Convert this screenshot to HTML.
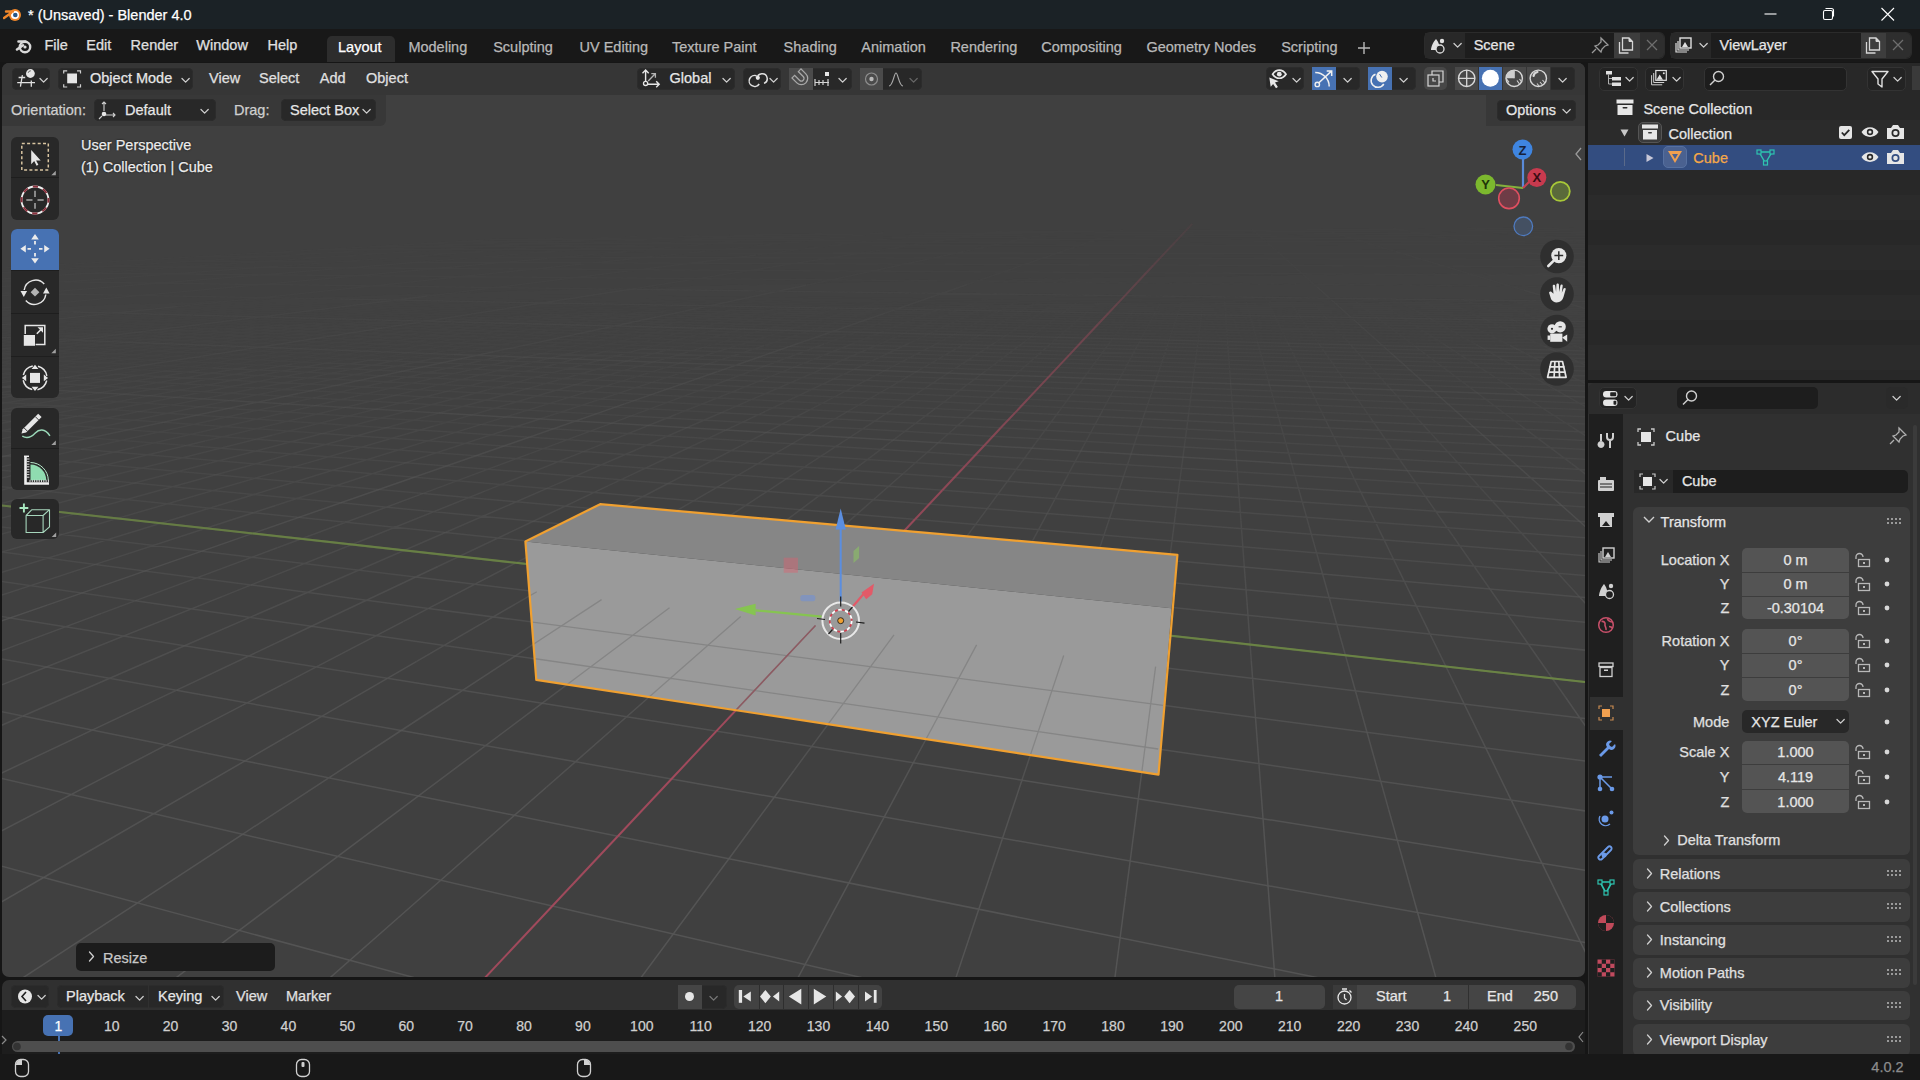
<!DOCTYPE html><html><head><meta charset="utf-8"><style>html,body{margin:0;padding:0}body{width:1920px;height:1080px;overflow:hidden;position:relative;background:#161616;font-family:"Liberation Sans",sans-serif}div{-webkit-text-stroke:0.25px currentColor}</style></head><body>
<div style="position:absolute;left:0px;top:0px;width:1920px;height:29px;background:#1b2226;border-radius:0px;"></div>
<svg style="position:absolute;left:3px;top:5px;" width="20" height="18" viewBox="0 0 20 18"><circle cx="12" cy="10" r="6" fill="#f0872a"/><circle cx="12" cy="10" r="4" fill="#fff"/><circle cx="12.3" cy="10" r="2.3" fill="#265787"/><path d="M1 13l7-5M3 6.5h7" stroke="#f0872a" stroke-width="2.4" stroke-linecap="round"/></svg>
<div style="position:absolute;left:28px;top:7.73px;font-size:14.5px;line-height:14.5px;color:#ffffff;white-space:pre;">* (Unsaved) - Blender 4.0</div>
<svg style="position:absolute;left:1760px;top:8px;" width="20" height="12" viewBox="0 0 20 12"><path d="M4.5 6h12" stroke="#fff" stroke-width="1.1"/></svg>
<svg style="position:absolute;left:1818px;top:6px;" width="22" height="16" viewBox="0 0 22 16"><rect x="5.5" y="4.5" width="9" height="9" rx="1.5" fill="none" stroke="#fff" stroke-width="1.1"/><path d="M7.5 2.5h6a2 2 0 0 1 2 2v6" fill="none" stroke="#fff" stroke-width="1.1"/></svg>
<svg style="position:absolute;left:1878px;top:6px;" width="20" height="16" viewBox="0 0 20 16"><path d="M3.5 2l12.5 12.5M16 2L3.5 14.5" stroke="#fff" stroke-width="1.1"/></svg>
<div style="position:absolute;left:0px;top:29px;width:1920px;height:33px;background:#181818;border-radius:0px;"></div>
<svg style="position:absolute;left:12px;top:36px;" width="22" height="20" viewBox="0 0 22 20"><path d="M5 13.5l6-4.2M6.5 5.5h7" stroke="#d9d9d9" stroke-width="2.6" stroke-linecap="round"/><circle cx="13" cy="11" r="5.2" fill="none" stroke="#d9d9d9" stroke-width="2.4"/><circle cx="13" cy="11" r="1.6" fill="#d9d9d9"/></svg>
<div style="position:absolute;left:44.4px;top:37.73px;font-size:14.5px;line-height:14.5px;color:#e0e0e0;white-space:pre;">File</div>
<div style="position:absolute;left:86.3px;top:37.73px;font-size:14.5px;line-height:14.5px;color:#e0e0e0;white-space:pre;">Edit</div>
<div style="position:absolute;left:130.6px;top:37.73px;font-size:14.5px;line-height:14.5px;color:#e0e0e0;white-space:pre;">Render</div>
<div style="position:absolute;left:196.3px;top:37.73px;font-size:14.5px;line-height:14.5px;color:#e0e0e0;white-space:pre;">Window</div>
<div style="position:absolute;left:267.5px;top:37.73px;font-size:14.5px;line-height:14.5px;color:#e0e0e0;white-space:pre;">Help</div>
<div style="position:absolute;left:327px;top:36px;width:68px;height:26px;background:#2d2d2d;border-radius:5px 5px 0 0px;"></div>
<div style="position:absolute;left:338px;top:40.13px;font-size:14.5px;line-height:14.5px;color:#ffffff;white-space:pre;">Layout</div>
<div style="position:absolute;left:408.4px;top:40.13px;font-size:14.5px;line-height:14.5px;color:#b8b8b8;white-space:pre;">Modeling</div>
<div style="position:absolute;left:493.2px;top:40.13px;font-size:14.5px;line-height:14.5px;color:#b8b8b8;white-space:pre;">Sculpting</div>
<div style="position:absolute;left:579.5px;top:40.13px;font-size:14.5px;line-height:14.5px;color:#b8b8b8;white-space:pre;">UV Editing</div>
<div style="position:absolute;left:672px;top:40.13px;font-size:14.5px;line-height:14.5px;color:#b8b8b8;white-space:pre;">Texture Paint</div>
<div style="position:absolute;left:783.6px;top:40.13px;font-size:14.5px;line-height:14.5px;color:#b8b8b8;white-space:pre;">Shading</div>
<div style="position:absolute;left:861.3px;top:40.13px;font-size:14.5px;line-height:14.5px;color:#b8b8b8;white-space:pre;">Animation</div>
<div style="position:absolute;left:950.4px;top:40.13px;font-size:14.5px;line-height:14.5px;color:#b8b8b8;white-space:pre;">Rendering</div>
<div style="position:absolute;left:1041.2px;top:40.13px;font-size:14.5px;line-height:14.5px;color:#b8b8b8;white-space:pre;">Compositing</div>
<div style="position:absolute;left:1146.4px;top:40.13px;font-size:14.5px;line-height:14.5px;color:#b8b8b8;white-space:pre;">Geometry Nodes</div>
<div style="position:absolute;left:1281.2px;top:40.13px;font-size:14.5px;line-height:14.5px;color:#b8b8b8;white-space:pre;">Scripting</div>
<svg style="position:absolute;left:1356px;top:40px;" width="16" height="16" viewBox="0 0 16 16"><path d="M8 2v12M2 8h12" stroke="#b8b8b8" stroke-width="1.4"/></svg>
<div style="position:absolute;left:1425.2px;top:33px;width:239.0px;height:24.5px;background:#1d1d1d;border-radius:5px;box-shadow:0 0 0 1px #2b2b2b"></div>
<div style="position:absolute;left:1425.2px;top:33px;width:39.5px;height:24.5px;background:#282828;border-radius:5px 0 0 5pxpx;"></div>
<svg style="position:absolute;left:1427.2px;top:35px;" width="36" height="20" viewBox="0 0 36 20"><path d="M4 15c0-4 3-9 5-11c2 2 4 7 4 11z" fill="#e0e0e0"/><circle cx="15" cy="6" r="2.2" fill="#e0e0e0"/><circle cx="13" cy="14" r="4" fill="#282828" stroke="#e0e0e0" stroke-width="1.3"/></svg>
<svg style="position:absolute;left:1453.2px;top:42px;" width="9" height="7" viewBox="0 0 9 7"><path d="M1 1.5l3.6 3.6l3.6-3.6" fill="none" stroke="#cfcfcf" stroke-width="1.25" stroke-linecap="round" stroke-linejoin="round"/></svg>
<div style="position:absolute;left:1473.7px;top:38.23px;font-size:14.5px;line-height:14.5px;color:#e6e6e6;white-space:pre;">Scene</div>
<div style="position:absolute;left:1614.2px;top:33px;width:25.5px;height:24.5px;background:#3d3d3d;border-radius:0px;"></div>
<svg style="position:absolute;left:1614.2px;top:33px;" width="25" height="24" viewBox="0 0 25 24"><path d="M5.5 9v11h9" fill="none" stroke="#d6d6d6" stroke-width="1.3"/><path d="M8.5 5h6.5l3.5 3.5v8.5h-10z" fill="none" stroke="#d6d6d6" stroke-width="1.3"/><path d="M15 5v3.5h3.5" fill="#d6d6d6" stroke="#d6d6d6" stroke-width="1"/></svg>
<div style="position:absolute;left:1639.7px;top:33px;width:24.5px;height:24.5px;background:#2e2e2e;border-radius:0 5px 5px 0px;"></div>
<svg style="position:absolute;left:1639.7px;top:33px;" width="25" height="24" viewBox="0 0 25 24"><path d="M7 7l10 10M17 7L7 17" stroke="#6e6e6e" stroke-width="1.3"/></svg>
<svg style="position:absolute;left:1589px;top:35px;" width="24" height="22" viewBox="0 0 24 22"><path d="M12 3l7 7l-3 1l-3 3l-1 3l-6-6l3-1l3-3z" fill="none" stroke="#9a9a9a" stroke-width="1.3"/><path d="M7 14l-4 4" stroke="#9a9a9a" stroke-width="1.3"/></svg>
<div style="position:absolute;left:1671px;top:33px;width:239.79999999999995px;height:24.5px;background:#1d1d1d;border-radius:5px;box-shadow:0 0 0 1px #2b2b2b"></div>
<div style="position:absolute;left:1671px;top:33px;width:39.5px;height:24.5px;background:#282828;border-radius:5px 0 0 5pxpx;"></div>
<svg style="position:absolute;left:1673px;top:35px;" width="36" height="20" viewBox="0 0 36 20"><rect x="7" y="3" width="11" height="10" fill="none" stroke="#e0e0e0" stroke-width="1.4"/><path d="M5 6v9h11M3 8v9h11" fill="none" stroke="#e0e0e0" stroke-width="1.2"/><path d="M9 12l3-5l3 5z" fill="#e0e0e0"/></svg>
<svg style="position:absolute;left:1699px;top:42px;" width="9" height="7" viewBox="0 0 9 7"><path d="M1 1.5l3.6 3.6l3.6-3.6" fill="none" stroke="#cfcfcf" stroke-width="1.25" stroke-linecap="round" stroke-linejoin="round"/></svg>
<div style="position:absolute;left:1719.5px;top:38.23px;font-size:14.5px;line-height:14.5px;color:#e6e6e6;white-space:pre;">ViewLayer</div>
<div style="position:absolute;left:1860.8px;top:33px;width:25.5px;height:24.5px;background:#3d3d3d;border-radius:0px;"></div>
<svg style="position:absolute;left:1860.8px;top:33px;" width="25" height="24" viewBox="0 0 25 24"><path d="M5.5 9v11h9" fill="none" stroke="#d6d6d6" stroke-width="1.3"/><path d="M8.5 5h6.5l3.5 3.5v8.5h-10z" fill="none" stroke="#d6d6d6" stroke-width="1.3"/><path d="M15 5v3.5h3.5" fill="#d6d6d6" stroke="#d6d6d6" stroke-width="1"/></svg>
<div style="position:absolute;left:1886.3px;top:33px;width:24.5px;height:24.5px;background:#2e2e2e;border-radius:0 5px 5px 0px;"></div>
<svg style="position:absolute;left:1886.3px;top:33px;" width="25" height="24" viewBox="0 0 25 24"><path d="M7 7l10 10M17 7L7 17" stroke="#6e6e6e" stroke-width="1.3"/></svg>
<div style="position:absolute;left:2px;top:63px;width:1583px;height:914px;background:#404040;border-radius:7px;overflow:hidden">
<svg style="position:absolute;left:-2px;top:-63px" width="1590" height="980" viewBox="0 0 1590 980"><path d="M45.2 335.6L-2.8 333.9M83.0 333.7L-11.5 330.4M120.0 331.7L-4.9 327.6M156.2 329.8L-13.0 324.4M191.6 328.0L-6.8 321.9M242.9 326.7L-0.8 319.4M276.8 324.9L-8.4 316.7M309.9 323.2L-2.7 314.5M359.4 321.9L-10.0 312.1M439.5 319.0L25.6 308.8M469.9 317.4L55.2 307.5M517.3 316.2L84.2 306.2M546.5 314.6L112.7 305.0M592.8 313.4L153.4 304.0M638.8 312.3L181.0 302.8M684.4 311.1L208.1 301.6M729.6 310.0L234.7 300.4M774.5 308.9L273.8 299.5M863.1 306.7L324.9 297.3M926.3 305.9L363.0 296.4M969.9 304.8L387.5 295.3M1033.2 304.0L424.9 294.4M1096.7 303.3L448.6 293.4M1181.7 302.8L485.4 292.5M1268.1 302.3L508.3 291.5M1378.7 302.1L544.5 290.7M1517.0 302.3L566.8 289.7M1603.5 300.0L637.8 288.0M1597.0 298.3L672.9 287.2M1590.8 296.7L693.7 286.3M1608.3 295.3L728.3 285.5M1602.1 293.8L762.7 284.7M1596.0 292.2L796.9 283.9M1590.1 290.8L830.9 283.1M1606.7 289.6L864.6 282.4M1600.8 288.2L898.2 281.6M88.5 273.2L-4.5 272.4M1610.9 285.7L979.7 280.2M1605.2 284.4L1012.7 279.4M1599.6 283.2L1060.9 278.8M1594.2 282.0L1093.7 278.1M1609.3 280.9L1141.9 277.4M1603.9 279.8L1190.4 276.8M1598.6 278.7L1239.0 276.2M1593.5 277.6L1287.7 275.5M1607.8 276.6L1336.6 274.9M253.8 267.3L37.8 266.0M1597.7 274.6L1469.8 273.8M1592.8 273.6L1537.7 273.3M417.7 262.2L123.6 261.0M600.3 257.5L197.7 256.7M833.0 253.2L262.4 253.0M1594.9 248.6L319.4 249.7M1599.7 244.3L370.0 246.7M1592.7 240.7L415.1 244.1M1597.0 237.5L455.7 241.7M1591.0 234.8L492.4 239.6M1594.9 232.3L600.2 237.3M1598.4 230.0L729.7 234.9M1584.9 228.1L911.4 232.3M1594.9 232.3L1552.2 228.3M1599.7 244.3L1467.4 228.2M1522.3 251.5L1393.0 228.6M1593.5 277.6L1574.2 273.5M1594.2 282.0L1555.9 273.4M1595.1 286.8L1537.7 273.3M1590.1 290.8L1519.7 273.2M1590.8 296.7L1501.9 273.1M1591.6 303.3L1484.2 273.0M1395.7 251.5L1321.5 229.1M1541.5 302.6L1449.3 272.8M1517.0 302.3L1432.2 272.7M1492.7 302.0L1415.1 272.6M1468.8 301.7L1398.3 272.5M1445.2 301.3L1389.9 276.2M1425.3 302.8L1372.5 276.1M1401.9 302.5L1355.2 276.0M1378.7 302.1L1338.1 275.9M1355.9 301.8L1321.1 275.8M1277.3 251.5L1252.0 228.9M1312.6 302.9L1287.7 275.5M1290.2 302.6L1271.2 275.4M1268.1 302.3L1254.9 275.3M1246.2 302.0L1238.7 275.2M1224.6 301.7L1222.7 275.1M1203.1 303.1L1206.8 275.0M1181.7 302.8L1191.0 274.9M1160.6 302.5L1173.3 278.7M1138.4 303.9L1157.1 278.6M1096.7 303.3L1125.1 278.3M1076.3 302.9L1109.3 278.2M1053.5 304.3L1093.7 278.1M1033.2 304.0L1078.2 277.9M1013.2 303.7L1062.8 277.8M989.7 305.1L1047.6 277.7M969.9 304.8L1032.5 277.6M945.9 306.2L1007.5 281.5M926.3 305.9L992.0 281.4M1062.0 251.5L1122.8 230.3M882.3 307.0L961.5 281.1M863.1 306.7L946.4 281.0M838.0 308.1L931.5 280.8M818.9 307.8L913.0 281.7M800.1 307.4L898.2 281.6M774.5 308.9L879.3 282.5M755.8 308.5L864.6 282.4M729.6 310.0L845.5 283.3M711.2 309.7L830.9 283.1M963.8 251.5L1061.3 230.7M666.2 310.8L796.9 283.9M638.8 312.3L777.1 284.8M610.8 313.8L762.7 284.7M592.8 313.4L742.6 285.6M564.2 315.0L728.3 285.5M546.5 314.6L707.9 286.4M517.3 316.2L693.7 286.3M487.5 317.8L672.9 287.2M469.9 317.4L658.9 287.1M860.5 253.2L1002.1 231.1M422.2 318.6L623.9 287.9M391.1 320.2L602.4 288.8M359.4 321.9L580.5 289.8M326.9 323.6L566.8 289.7M309.9 323.2L544.5 290.7M276.8 324.9L522.0 291.7M242.9 326.7L508.3 291.5M208.3 328.5L485.4 292.5M191.6 328.0L471.9 292.3M756.7 254.9L939.7 232.1M120.0 331.7L424.9 294.4M83.0 333.7L411.5 294.2M45.2 335.6L387.5 295.3M6.4 337.7L363.0 296.4M-9.8 337.0L338.1 297.5M-2.8 333.9L324.9 297.3M-18.4 333.3L299.6 298.4M-11.5 330.4L273.8 299.5M-4.9 327.6L247.7 300.7M652.5 256.7L883.6 232.5M-13.0 324.4L208.1 301.6M-6.8 321.9L181.0 302.8M-0.8 319.4L153.4 304.0M-14.4 319.0L140.7 303.7M-8.4 316.7L112.7 305.0M-2.7 314.5L84.2 306.2M-15.7 314.2L55.2 307.5M-10.0 312.1L25.6 308.8M547.9 258.4L822.1 233.5M417.7 262.2L760.5 234.4M278.1 266.2L698.8 235.4M88.5 273.2L636.9 236.4M-0.2 273.2L562.7 238.2M-20.4 269.4L499.3 239.2" stroke="#585858" stroke-opacity="0.031" stroke-width="1.5" fill="none"/><path d="M12.5 381.0L-9.4 379.7M64.8 377.5L-0.1 374.0M115.5 374.2L-11.7 367.7M164.7 371.0L-3.1 362.8M212.3 367.9L-13.7 357.3M281.5 365.9L-5.6 353.1M326.4 362.9L-15.5 348.3M370.0 360.0L-7.8 344.6M435.9 358.1L-0.5 341.0M541.0 353.5L45.2 335.6M604.1 351.7L83.0 333.7M642.0 349.1L120.0 331.7M703.4 347.4L156.2 329.8M789.5 346.5L191.6 328.0M849.9 344.7L242.9 326.7M936.2 343.8L276.8 324.9M1023.0 342.8L309.9 323.2M1139.0 342.6L359.4 321.9M73.0 312.1L-4.4 310.1M1614.5 348.1L439.5 319.0M1605.0 344.5L469.9 317.4M1595.9 341.0L517.3 316.2M1620.7 338.5L546.5 314.6M1611.6 335.3L592.8 313.4M1602.9 332.3L638.8 312.3M1594.6 329.4L684.4 311.1M1617.5 327.2L729.6 310.0M1609.1 324.5L774.5 308.9M339.5 299.1L-1.1 292.9M1593.4 319.4L863.1 306.7M1614.7 317.5L926.3 305.9M1607.0 315.2L969.9 304.8M1599.6 313.0L1033.2 304.0M1592.4 310.8L1096.7 303.3M1612.3 309.1L1181.7 302.8M1605.1 307.1L1268.1 302.3M1598.2 305.2L1378.7 302.1M1591.6 303.3L1517.0 302.3M630.3 289.2L-7.4 281.0M1595.1 286.8L88.5 273.2M1602.7 275.6L253.8 267.3M1591.6 266.7L417.7 262.2M1598.0 259.5L600.3 257.5M1603.4 253.6L833.0 253.2M1591.0 263.6L1522.3 251.5M1523.8 290.1L1395.7 251.5M1593.4 319.4L1541.5 302.6M1594.6 329.4L1517.0 302.3M1595.9 341.0L1492.7 302.0M1579.0 347.2L1468.8 301.7M1544.2 346.3L1445.2 301.3M1509.9 345.5L1425.3 302.8M1476.3 344.7L1401.9 302.5M1443.3 343.8L1378.7 302.1M1415.4 346.5L1355.9 301.8M1316.8 286.7L1277.3 251.5M1350.6 344.8L1312.6 302.9M1319.1 344.0L1290.2 302.6M1288.0 343.2L1268.1 302.3M1257.6 342.5L1246.2 302.0M1227.6 341.7L1224.6 301.7M1197.7 344.2L1203.1 303.1M1168.1 343.4L1181.7 302.8M1139.0 342.6L1160.6 302.5M1110.3 341.9L1138.4 303.9M1050.9 343.6L1096.7 303.3M1023.0 342.8L1076.3 302.9M995.7 342.1L1053.5 304.3M963.2 344.6L1033.2 304.0M936.2 343.8L1013.2 303.7M909.7 343.0L989.7 305.1M876.1 345.5L969.9 304.8M849.9 344.7L945.9 306.2M824.2 344.0L926.3 305.9M967.3 284.5L1062.0 251.5M764.1 345.7L882.3 307.0M728.4 348.2L863.1 306.7M703.4 347.4L838.0 308.1M666.6 350.0L818.9 307.8M642.0 349.1L800.1 307.4M604.1 351.7L774.5 308.9M579.9 350.9L755.8 308.5M541.0 353.5L729.6 310.0M500.9 356.3L711.2 309.7M806.2 285.2L963.8 251.5M435.9 358.1L666.2 310.8M403.0 359.1L638.8 312.3M370.0 360.0L610.8 313.8M326.4 362.9L592.8 313.4M292.6 363.9L564.2 315.0M247.0 366.9L546.5 314.6M200.0 370.0L517.3 316.2M164.7 371.0L487.5 317.8M115.5 374.2L469.9 317.4M630.3 289.2L860.5 253.2M12.5 381.0L422.2 318.6M-9.4 379.7L391.1 320.2M-0.1 374.0L359.4 321.9M-6.1 370.8L326.9 323.6M-11.7 367.7L309.9 323.2M-3.1 362.8L276.8 324.9M-8.5 360.0L242.9 326.7M-0.3 355.6L208.3 328.5M-5.6 353.1L191.6 328.0M427.9 296.0L756.7 254.9M-2.9 346.8L120.0 331.7M-7.8 344.6L83.0 333.7M-0.5 341.0L45.2 335.6M-5.2 339.0L6.4 337.7M177.7 306.4L652.5 256.7M-16.9 309.8L547.9 258.4M-14.8 297.1L417.7 262.2M-13.3 287.5L278.1 266.2M-0.0 279.1L88.5 273.2" stroke="#585858" stroke-opacity="0.094" stroke-width="1.5" fill="none"/><path d="M12.2 421.3L-15.1 419.2M77.1 416.2L-3.4 410.6M139.4 411.4L-17.4 401.0M199.5 406.7L-6.7 393.8M313.0 397.9L12.5 381.0M395.4 395.3L64.8 377.5M447.3 391.2L115.5 374.2M526.8 388.7L164.7 371.0M575.1 384.8L212.3 367.9M651.8 382.4L281.5 365.9M727.4 380.0L326.4 362.9M833.7 379.0L370.0 360.0M940.8 377.9L435.9 358.1M126.1 342.2L-9.8 337.0M1268.1 379.8L541.0 353.5M1590.1 386.0L604.1 351.7M1622.3 381.9L642.0 349.1M1610.5 376.5L703.4 347.4M1599.4 371.5L789.5 346.5M1629.1 367.9L849.9 344.7M1618.0 363.3L936.2 343.8M1607.5 359.0L1023.0 342.8M1597.5 354.9L1139.0 342.6M498.5 323.0L73.0 312.1M1601.1 321.9L339.5 299.1M1610.2 301.8L630.3 289.2M1592.4 310.8L1523.8 290.1M1597.5 354.9L1579.0 347.2M1599.4 371.5L1544.2 346.3M1590.1 386.0L1509.9 345.5M1556.7 390.3L1476.3 344.7M1512.6 388.7L1443.3 343.8M1469.5 387.1L1415.4 346.5M1353.7 319.7L1316.8 286.7M1386.2 384.1L1350.6 344.8M1346.0 382.6L1319.1 344.0M1306.6 381.2L1288.0 343.2M1268.1 379.8L1257.6 342.5M1230.3 378.5L1227.6 341.7M1193.4 377.1L1197.7 344.2M1157.3 375.8L1168.1 343.4M1119.2 379.5L1139.0 342.6M1083.5 378.2L1110.3 341.9M1011.7 378.1L1050.9 343.6M977.8 376.8L1023.0 342.8M940.8 377.9L995.7 342.1M907.9 376.7L963.2 344.6M870.9 377.8L936.2 343.8M833.7 379.0L909.7 343.0M796.3 380.2L876.1 345.5M764.8 378.9L849.9 344.7M727.4 380.0L824.2 344.0M885.4 313.0L967.3 284.5M651.8 382.4L764.1 345.7M613.6 383.6L728.4 348.2M575.1 384.8L703.4 347.4M526.8 388.7L666.6 350.0M487.2 390.0L642.0 349.1M447.3 391.2L604.1 351.7M395.4 395.3L579.9 350.9M354.4 396.6L541.0 353.5M299.6 400.9L500.9 356.3M656.7 317.1L806.2 285.2M199.5 406.7L435.9 358.1M139.4 411.4L403.0 359.1M94.7 412.8L370.0 360.0M31.2 417.7L326.4 362.9M-15.1 419.2L292.6 363.9M-3.4 410.6L247.0 366.9M-10.6 405.7L200.0 370.0M-17.4 401.0L164.7 371.0M-6.7 393.8L115.5 374.2M382.4 327.9L630.3 289.2M-3.2 383.3L12.5 381.0M-10.6 350.6L427.9 296.0M-19.6 327.1L177.7 306.4" stroke="#585858" stroke-opacity="0.156" stroke-width="1.5" fill="none"/><path d="M5.4 456.0L-26.3 453.1M81.2 449.3L-12.2 441.5M186.6 445.6L-27.8 428.7M256.0 439.3L12.2 421.3M322.4 433.4L77.1 416.2M386.0 427.7L139.4 411.4M481.4 424.4L199.5 406.7M631.2 415.9L313.0 397.9M721.1 412.8L395.4 395.3M847.4 411.7L447.3 391.2M974.7 410.6L526.8 388.7M1145.3 411.4L575.1 384.8M1619.0 425.6L651.8 382.4M1604.8 417.5L727.4 380.0M1591.5 410.0L833.7 379.0M1627.6 404.9L940.8 377.9M453.6 354.5L126.1 342.2M1601.8 391.9L1268.1 379.8M1624.5 351.9L498.5 323.0M1591.5 410.0L1556.7 390.3M1572.5 427.4L1512.6 388.7M1520.0 425.0L1469.5 387.1M1390.9 353.0L1353.7 319.7M1419.2 420.4L1386.2 384.1M1370.8 418.2L1346.0 382.6M1323.6 416.0L1306.6 381.2M1277.6 413.9L1268.1 379.8M1232.8 411.9L1230.3 378.5M1188.7 413.5L1193.4 377.1M1145.3 411.4L1157.3 375.8M1103.1 409.5L1119.2 379.5M1059.3 411.0L1083.5 378.2M974.7 410.6L1011.7 378.1M935.2 408.7L977.8 376.8M891.5 410.2L940.8 377.9M847.4 411.7L907.9 376.7M809.6 409.8L870.9 377.8M765.5 411.3L833.7 379.0M721.1 412.8L796.3 380.2M676.4 414.3L764.8 378.9M631.2 415.9L727.4 380.0M798.8 343.2L885.4 313.0M539.8 419.0L651.8 382.4M481.4 424.4L613.6 383.6M433.9 426.0L575.1 384.8M386.0 427.7L526.8 388.7M322.4 433.4L487.2 390.0M272.8 435.1L447.3 391.2M205.0 441.1L395.4 395.3M134.1 447.4L354.4 396.6M60.0 454.0L299.6 400.9M493.6 351.8L656.7 317.1M-3.7 448.5L199.5 406.7M-12.2 441.5L139.4 411.4M-20.2 434.9L94.7 412.8M-7.5 424.9L31.2 417.7M34.9 382.2L382.4 327.9" stroke="#585858" stroke-opacity="0.219" stroke-width="1.5" fill="none"/><path d="M48.6 491.5L-24.3 484.0M134.4 483.0L-8.7 469.2M215.8 474.8L5.4 456.0M293.1 467.1L81.2 449.3M405.9 462.8L186.6 445.6M476.1 455.7L256.0 439.3M583.4 451.6L322.4 433.4M688.6 447.7L386.0 427.7M791.9 443.8L481.4 424.4M229.4 400.6L-19.3 385.8M1184.3 447.1L631.2 415.9M1625.2 461.4L721.1 412.8M1608.6 450.7L847.4 411.7M1593.3 440.8L974.7 410.6M1634.3 434.3L1145.3 411.4M853.7 369.5L453.6 354.5M1593.3 440.8L1572.5 427.4M1571.6 463.7L1520.0 425.0M1427.4 385.6L1390.9 353.0M1452.5 457.1L1419.2 420.4M1395.7 454.0L1370.8 418.2M1340.7 450.9L1323.6 416.0M1287.2 448.0L1277.6 413.9M1235.7 450.0L1232.8 411.9M1184.3 447.1L1188.7 413.5M1134.3 444.3L1145.3 411.4M1083.3 446.3L1103.1 409.5M1035.3 443.5L1059.3 411.0M938.2 442.7L974.7 410.6M887.2 444.6L935.2 408.7M842.9 441.9L891.5 410.2M791.9 443.8L847.4 411.7M740.5 445.8L809.6 409.8M688.6 447.7L765.5 411.3M636.2 449.7L721.1 412.8M583.4 451.6L676.4 414.3M530.0 453.6L631.2 415.9M717.2 371.7L798.8 343.2M405.9 462.8L539.8 419.0M349.8 465.0L481.4 424.4M274.3 472.6L433.9 426.0M215.8 474.8L386.0 427.7M134.4 483.0L322.4 433.4M48.6 491.5L272.8 435.1M-14.6 494.0L205.0 441.1M-24.3 484.0L134.1 447.4M-8.7 469.2L60.0 454.0M298.2 393.5L493.6 351.8M-13.2 389.7L34.9 382.2" stroke="#585858" stroke-opacity="0.281" stroke-width="1.5" fill="none"/><path d="M62.6 534.4L-21.8 524.2M253.5 512.7L48.6 491.5M340.8 502.8L134.4 483.0M423.3 493.4L215.8 474.8M547.0 488.4L293.1 467.1M668.1 483.5L405.9 462.8M786.6 478.7L476.1 455.7M954.2 477.6L583.4 451.6M1633.6 510.2L1561.6 505.4M1238.2 484.1L688.6 447.7M1613.8 495.3L791.9 443.8M438.9 413.0L229.4 400.6M1643.2 473.1L1184.3 447.1M1614.3 398.2L853.7 369.5M1595.7 481.8L1571.6 463.7M1468.9 422.7L1427.4 385.6M1492.3 500.9L1452.5 457.1M1425.3 496.4L1395.7 454.0M1360.8 492.2L1340.7 450.9M1298.4 488.0L1287.2 448.0M1238.2 484.1L1235.7 450.0M1179.9 480.2L1184.3 447.1M1123.6 476.5L1134.3 444.3M1065.8 478.9L1083.3 446.3M1011.9 475.2L1035.3 443.5M902.7 474.0L938.2 442.7M845.0 476.3L887.2 444.6M786.6 478.7L842.9 441.9M727.7 481.1L791.9 443.8M668.1 483.5L740.5 445.8M607.9 485.9L688.6 447.7M547.0 488.4L636.2 449.7M485.5 490.9L583.4 451.6M423.3 493.4L530.0 453.6M624.6 403.9L717.2 371.7M275.6 505.5L405.9 462.8M185.9 515.5L349.8 465.0M90.7 526.2L274.3 472.6M-10.5 537.5L215.8 474.8M-21.8 524.2L134.4 483.0M-4.1 504.8L48.6 491.5M27.7 451.2L298.2 393.5" stroke="#585858" stroke-opacity="0.344" stroke-width="1.5" fill="none"/><path d="M95.4 564.4L-42.1 546.3M201.8 551.2L62.6 534.4M445.4 532.5L253.5 512.7M533.3 521.3L340.8 502.8M668.5 515.4L423.3 493.4M800.5 509.7L547.0 488.4M1047.3 513.4L668.1 483.5M1599.1 538.9L786.6 478.7M1655.5 526.6L954.2 477.6M1561.6 505.4L1238.2 484.1M725.8 430.1L438.9 413.0M1511.1 460.3L1468.9 422.7M1529.9 542.4L1492.3 500.9M1453.3 536.5L1425.3 496.4M1379.7 530.9L1360.8 492.2M1308.9 525.5L1298.4 488.0M1240.9 520.3L1238.2 484.1M1175.3 515.3L1179.9 480.2M1109.6 518.3L1123.6 476.5M1047.3 513.4L1065.8 478.9M987.3 508.6L1011.9 475.2M856.7 514.4L902.7 474.0M800.5 509.7L845.0 476.3M734.9 512.5L786.6 478.7M668.5 515.4L727.7 481.1M601.3 518.3L668.1 483.5M533.3 521.3L607.9 485.9M445.4 532.5L547.0 488.4M373.9 535.7L485.5 490.9M277.3 547.8L423.3 493.4M529.2 437.2L624.6 403.9M95.4 564.4L275.6 505.5M-18.4 578.5L185.9 515.5M-30.8 561.6L90.7 526.2M-17.8 460.9L27.7 451.2" stroke="#585858" stroke-opacity="0.406" stroke-width="1.5" fill="none"/><path d="M10.4 617.9L-42.3 609.5M135.3 600.8L-18.4 578.5M251.0 584.9L95.4 564.4M415.5 577.1L201.8 551.2M669.0 555.6L445.4 532.5M817.8 548.6L533.3 521.3M1097.7 553.9L668.5 515.4M1645.7 580.6L800.5 509.7M1621.1 558.5L1047.3 513.4M1595.7 481.8L725.8 430.1M1553.4 498.1L1511.1 460.3M1579.6 597.0L1529.9 542.4M1489.9 589.0L1453.3 536.5M1398.8 570.1L1379.7 530.9M1319.5 563.2L1308.9 525.5M1244.3 567.0L1240.9 520.3M1169.5 560.3L1175.3 515.3M1097.7 553.9L1109.6 518.3M1028.9 547.7L1047.3 513.4M955.8 551.2L987.3 508.6M817.8 548.6L856.7 514.4M743.9 552.1L800.5 509.7M669.0 555.6L734.9 512.5M593.0 559.2L668.5 515.4M516.0 562.8L601.3 518.3M437.9 566.5L533.3 521.3M333.8 581.0L445.4 532.5M222.0 596.6L373.9 535.7M101.5 613.4L277.3 547.8M414.1 477.3L529.2 437.2M-4.8 597.2L95.4 564.4" stroke="#585858" stroke-opacity="0.469" stroke-width="1.5" fill="none"/><path d="M46.4 667.0L-13.6 656.3M184.5 645.8L10.4 617.9M311.4 626.3L135.3 600.8M428.5 608.4L251.0 584.9M601.6 599.6L415.5 577.1M1082.8 598.3L669.0 555.6M1604.1 624.1L817.8 548.6M1673.6 605.4L1097.7 553.9M1599.1 538.9L1553.4 498.1M1591.4 610.1L1579.6 597.0M1517.9 629.1L1489.9 589.0M1423.0 619.6L1398.8 570.1M1332.9 610.7L1319.5 563.2M1247.0 602.1L1244.3 567.0M1163.4 606.6L1169.5 560.3M1082.8 598.3L1097.7 553.9M1005.9 590.4L1028.9 547.7M923.8 594.6L955.8 551.2M769.6 591.1L817.8 548.6M686.2 595.3L743.9 552.1M601.6 599.6L669.0 555.6M515.7 603.9L593.0 559.2M403.1 621.6L516.0 562.8M311.4 626.3L437.9 566.5M184.5 645.8L333.8 581.0M46.4 667.0L222.0 596.6M-13.6 656.3L101.5 613.4M252.8 533.4L414.1 477.3" stroke="#585858" stroke-opacity="0.531" stroke-width="1.5" fill="none"/><path d="M22.9 716.0L-42.6 702.7M176.4 690.3L46.4 667.0M387.4 678.3L184.5 645.8M515.4 655.9L311.4 626.3M708.0 645.2L428.5 608.4M976.6 644.9L601.6 599.6M1632.2 655.0L1082.8 598.3M1565.5 697.3L1517.9 629.1M1454.7 684.5L1423.0 619.6M1350.2 672.3L1332.9 610.7M1251.3 660.9L1247.0 602.1M1157.7 650.0L1163.4 606.6M1069.0 639.7L1082.8 598.3M976.6 644.9L1005.9 590.4M894.0 634.9L923.8 594.6M708.0 645.2L769.6 591.1M612.5 650.5L686.2 595.3M515.4 655.9L601.6 599.6M416.7 661.4L515.7 603.9M282.8 684.3L403.1 621.6M136.0 709.4L311.4 626.3M-25.7 737.1L184.5 645.8M-42.6 702.7L46.4 667.0M47.2 605.1L252.8 533.4" stroke="#585858" stroke-opacity="0.594" stroke-width="1.5" fill="none"/><path d="M71.1 794.6L-6.1 776.7M245.0 760.9L22.9 716.0M401.2 730.5L176.4 690.3M542.3 703.2L387.4 678.3M754.4 690.5L515.4 655.9M1612.4 764.6L708.0 645.2M1702.8 732.8L976.6 644.9M1595.4 740.3L1565.5 697.3M1485.7 747.9L1454.7 684.5M1367.0 732.2L1350.2 672.3M1255.5 717.5L1251.3 660.9M1150.7 703.7L1157.7 650.0M1045.4 710.3L1069.0 639.7M948.7 697.0L976.6 644.9M843.5 703.4L894.0 634.9M649.4 696.8L708.0 645.2M542.3 703.2L612.5 650.5M401.2 730.5L515.4 655.9M285.0 737.7L416.7 661.4M120.8 768.7L282.8 684.3M-6.1 776.7L136.0 709.4M-28.8 631.5L47.2 605.1" stroke="#585858" stroke-opacity="0.656" stroke-width="1.5" fill="none"/><path d="M43.6 877.5L-43.1 854.1M242.5 834.3L71.1 794.6M418.5 795.9L245.0 760.9M671.5 778.9L401.2 730.5M913.4 762.7L542.3 703.2M1651.4 820.5L754.4 690.5M1525.9 830.3L1485.7 747.9M1388.6 809.4L1367.0 732.2M1260.9 789.9L1255.5 717.5M1141.8 771.8L1150.7 703.7M1022.0 780.1L1045.4 710.3M913.4 762.7L948.7 697.0M793.8 770.7L843.5 703.4M546.4 787.3L649.4 696.8M418.5 795.9L542.3 703.2M242.5 834.3L401.2 730.5M43.6 877.5L285.0 737.7M-43.1 854.1L120.8 768.7" stroke="#585858" stroke-opacity="0.719" stroke-width="1.5" fill="none"/><path d="M7.1 988.1L-91.9 956.1M239.2 930.4L43.6 877.5M552.3 906.0L242.5 834.3M728.9 858.7L418.5 795.9M1758.1 973.5L671.5 778.9M1698.9 888.6L913.4 762.7M1580.3 941.6L1525.9 830.3M1417.6 912.5L1388.6 809.4M1268.0 885.7L1260.9 789.9M1125.4 897.3L1141.8 771.8M991.3 871.8L1022.0 780.1M848.9 882.9L913.4 762.7M728.9 858.7L793.8 770.7M397.9 918.0L546.4 787.3M239.2 930.4L418.5 795.9M7.1 988.1L242.5 834.3M-20.4 914.7L43.6 877.5" stroke="#585858" stroke-opacity="0.781" stroke-width="1.5" fill="none"/><path d="M470.8 992.9L239.2 930.4M949.2 997.9L552.3 906.0M1443.0 1003.0L728.9 858.7M1603.0 988.0L1580.3 941.6M1443.0 1003.0L1417.6 912.5M1277.9 1018.5L1268.0 885.7M1114.2 983.2L1125.4 897.3M949.2 997.9L991.3 871.8M779.0 1013.1L848.9 882.9M603.3 1028.7L728.9 858.7M295.9 1007.8L397.9 918.0M115.5 1023.1L239.2 930.4" stroke="#585858" stroke-opacity="0.844" stroke-width="1.5" fill="none"/><path d="M-1610.4 3211.4L-248.2 1759.3" stroke="#a04a5c" stroke-opacity="1.000" stroke-width="2"/><path d="M-248.2 1759.3L228.2 1251.5" stroke="#a04a5c" stroke-opacity="1.000" stroke-width="2"/><path d="M228.2 1251.5L470.8 992.9" stroke="#a04a5c" stroke-opacity="1.000" stroke-width="2"/><path d="M470.8 992.9L617.8 836.2" stroke="#a04a5c" stroke-opacity="1.000" stroke-width="2"/><path d="M617.8 836.2L716.4 731.1" stroke="#a04a5c" stroke-opacity="1.000" stroke-width="2"/><path d="M716.4 731.1L787.1 655.7" stroke="#a04a5c" stroke-opacity="1.000" stroke-width="2"/><path d="M787.1 655.7L840.3 599.0" stroke="#a04a5c" stroke-opacity="1.000" stroke-width="2"/><path d="M840.3 599.0L881.8 554.7" stroke="#a04a5c" stroke-opacity="0.945" stroke-width="2"/><path d="M881.8 554.7L915.1 519.3" stroke="#a04a5c" stroke-opacity="0.890" stroke-width="2"/><path d="M915.1 519.3L942.3 490.2" stroke="#a04a5c" stroke-opacity="0.839" stroke-width="2"/><path d="M942.3 490.2L965.1 466.0" stroke="#a04a5c" stroke-opacity="0.791" stroke-width="2"/><path d="M965.1 466.0L984.3 445.5" stroke="#a04a5c" stroke-opacity="0.748" stroke-width="2"/><path d="M984.3 445.5L1000.8 427.8" stroke="#a04a5c" stroke-opacity="0.708" stroke-width="2"/><path d="M1000.8 427.8L1015.2 412.6" stroke="#a04a5c" stroke-opacity="0.672" stroke-width="2"/><path d="M1015.2 412.6L1027.7 399.2" stroke="#a04a5c" stroke-opacity="0.639" stroke-width="2"/><path d="M1027.7 399.2L1038.8 387.4" stroke="#a04a5c" stroke-opacity="0.608" stroke-width="2"/><path d="M1038.8 387.4L1048.7 376.9" stroke="#a04a5c" stroke-opacity="0.581" stroke-width="2"/><path d="M1048.7 376.9L1069.1 355.1" stroke="#a04a5c" stroke-opacity="0.537" stroke-width="2"/><path d="M1069.1 355.1L1085.1 338.0" stroke="#a04a5c" stroke-opacity="0.485" stroke-width="2"/><path d="M1085.1 338.0L1098.0 324.3" stroke="#a04a5c" stroke-opacity="0.442" stroke-width="2"/><path d="M1098.0 324.3L1108.6 313.0" stroke="#a04a5c" stroke-opacity="0.405" stroke-width="2"/><path d="M1108.6 313.0L1117.4 303.6" stroke="#a04a5c" stroke-opacity="0.374" stroke-width="2"/><path d="M1117.4 303.6L1125.0 295.6" stroke="#a04a5c" stroke-opacity="0.348" stroke-width="2"/><path d="M1125.0 295.6L1131.4 288.7" stroke="#a04a5c" stroke-opacity="0.324" stroke-width="2"/><path d="M1131.4 288.7L1137.0 282.7" stroke="#a04a5c" stroke-opacity="0.304" stroke-width="2"/><path d="M1137.0 282.7L1146.3 272.8" stroke="#a04a5c" stroke-opacity="0.278" stroke-width="2"/><path d="M1146.3 272.8L1153.6 265.0" stroke="#a04a5c" stroke-opacity="0.249" stroke-width="2"/><path d="M1153.6 265.0L1159.6 258.6" stroke="#a04a5c" stroke-opacity="0.226" stroke-width="2"/><path d="M1159.6 258.6L1164.5 253.4" stroke="#a04a5c" stroke-opacity="0.207" stroke-width="2"/><path d="M1164.5 253.4L1168.7 248.9" stroke="#a04a5c" stroke-opacity="0.190" stroke-width="2"/><path d="M1168.7 248.9L1172.2 245.2" stroke="#a04a5c" stroke-opacity="0.176" stroke-width="2"/><path d="M1172.2 245.2L1175.3 241.9" stroke="#a04a5c" stroke-opacity="0.164" stroke-width="2"/><path d="M1175.3 241.9L1177.9 239.1" stroke="#a04a5c" stroke-opacity="0.154" stroke-width="2"/><path d="M1177.9 239.1L1180.3 236.6" stroke="#a04a5c" stroke-opacity="0.145" stroke-width="2"/><path d="M1180.3 236.6L1182.4 234.4" stroke="#a04a5c" stroke-opacity="0.136" stroke-width="2"/><path d="M1182.4 234.4L1184.2 232.4" stroke="#a04a5c" stroke-opacity="0.129" stroke-width="2"/><path d="M1184.2 232.4L1185.9 230.6" stroke="#a04a5c" stroke-opacity="0.122" stroke-width="2"/><path d="M1185.9 230.6L1187.4 229.0" stroke="#a04a5c" stroke-opacity="0.117" stroke-width="2"/><path d="M1187.4 229.0L1188.8 227.5" stroke="#a04a5c" stroke-opacity="0.111" stroke-width="2"/><path d="M1188.8 227.5L1190.0 226.2" stroke="#a04a5c" stroke-opacity="0.106" stroke-width="2"/><path d="M1190.0 226.2L1191.1 225.0" stroke="#a04a5c" stroke-opacity="0.102" stroke-width="2"/><path d="M1191.1 225.0L1192.2 223.9" stroke="#a04a5c" stroke-opacity="0.098" stroke-width="2"/><path d="M-10135.7 -624.8L-13407.3 -989.6" stroke="#6b8445" stroke-opacity="0.380" stroke-width="2"/><path d="M-13407.3 -989.6L-21341.5 -1874.2" stroke="#6b8445" stroke-opacity="0.411" stroke-width="2"/><path d="M-21341.5 -1874.2L-68613.5 -7144.8" stroke="#6b8445" stroke-opacity="0.447" stroke-width="2"/><path d="M-68613.5 -7144.8L42581.9 5253.0" stroke="#6b8445" stroke-opacity="0.489" stroke-width="2"/><path d="M42581.9 5253.0L14488.4 2120.7" stroke="#6b8445" stroke-opacity="0.539" stroke-width="2"/><path d="M14488.4 2120.7L8033.4 1401.0" stroke="#6b8445" stroke-opacity="0.598" stroke-width="2"/><path d="M8033.4 1401.0L5168.0 1081.5" stroke="#6b8445" stroke-opacity="0.668" stroke-width="2"/><path d="M5168.0 1081.5L3549.2 901.0" stroke="#6b8445" stroke-opacity="0.749" stroke-width="2"/><path d="M3549.2 901.0L2509.0 785.0" stroke="#6b8445" stroke-opacity="0.838" stroke-width="2"/><path d="M2509.0 785.0L1784.1 704.2" stroke="#6b8445" stroke-opacity="0.923" stroke-width="2"/><path d="M1784.1 704.2L1250.1 644.6" stroke="#6b8445" stroke-opacity="0.981" stroke-width="2"/><path d="M1250.1 644.6L840.3 599.0" stroke="#6b8445" stroke-opacity="0.990" stroke-width="2"/><path d="M840.3 599.0L516.0 562.8" stroke="#6b8445" stroke-opacity="0.944" stroke-width="2"/><path d="M516.0 562.8L252.8 533.4" stroke="#6b8445" stroke-opacity="0.865" stroke-width="2"/><path d="M252.8 533.4L35.0 509.2" stroke="#6b8445" stroke-opacity="0.775" stroke-width="2"/><path d="M35.0 509.2L-148.2 488.7" stroke="#6b8445" stroke-opacity="0.691" stroke-width="2"/><path d="M-148.2 488.7L-304.4 471.3" stroke="#6b8445" stroke-opacity="0.618" stroke-width="2"/><path d="M-304.4 471.3L-439.3 456.3" stroke="#6b8445" stroke-opacity="0.556" stroke-width="2"/><path d="M-439.3 456.3L-556.8 443.2" stroke="#6b8445" stroke-opacity="0.503" stroke-width="2"/><path d="M-556.8 443.2L-660.2 431.7" stroke="#6b8445" stroke-opacity="0.459" stroke-width="2"/><path d="M-660.2 431.7L-751.8 421.4" stroke="#6b8445" stroke-opacity="0.421" stroke-width="2"/><path d="M-751.8 421.4L-833.6 412.3" stroke="#6b8445" stroke-opacity="0.389" stroke-width="2"/><path d="M-833.6 412.3L-907.0 404.1" stroke="#6b8445" stroke-opacity="0.361" stroke-width="2"/><path d="M-907.0 404.1L-973.3 396.7" stroke="#6b8445" stroke-opacity="0.336" stroke-width="2"/>
<polygon points="525.4,541.4 1171.5,608.2 1158.5,774.6 536.3,679.8" fill="#9a9a9a"/>
<polygon points="525.4,541.4 600.1,504.2 1177.4,554.9 1171.5,608.2" fill="#868686"/>
<clipPath id="fc"><polygon points="525.4,541.4 1171.5,608.2 1158.5,774.6 536.3,679.8"/></clipPath>
<g clip-path="url(#fc)"><path d="M1155.6 666.6L1091.0 1160.5M1063.7 655.5L911.0 1111.8M976.6 644.9L749.4 1068.2M894.0 634.9L603.3 1028.7M815.5 625.4L470.8 992.9M740.7 616.4L349.9 960.3M669.5 607.8L239.2 930.4M601.6 599.6L137.5 902.9M536.8 591.7L43.6 877.5M1113.8 1166.6L33.0 874.7M1127.3 1039.2L143.6 811.4M1137.7 941.3L235.4 758.9M1146.0 863.9L312.7 714.7M1152.7 801.0L378.7 676.9M1158.2 749.0L435.7 644.3M1162.9 705.3L485.5 615.9" stroke="#858585" stroke-width="1.3" fill="none"/>
<path d="M815.5 625.4L470.8 992.9" stroke="#8e5a62" stroke-width="1.5"/></g>
<polygon points="525.4,541.4 600.1,504.2 1177.4,554.9 1158.5,774.6 536.3,679.8" fill="none" stroke="#f0a030" stroke-width="2.2" stroke-linejoin="round"/>
<path d="M840.7 601.7V527" stroke="#5b8ee0" stroke-width="2"/><path d="M835.6 529.6l5.1-21l5.1 21z" fill="#5b8ee0"/>
<path d="M821.7 616.7L755.5 610.3" stroke="#86c451" stroke-width="2.2"/><path d="M734.8 608.9l20.8-5.2v11.9z" fill="#86c451"/>
<path d="M852.6 606.7L864 593.5" stroke="#e25a68" stroke-width="2.2"/><path d="M861.5 592.6l12.5-8.9l-1.8 10.5l-6 5z" fill="#e25a68"/>
<rect x="784.2" y="558.2" width="13.2" height="14" fill="#e06070" opacity="0.42" stroke="#e06070" stroke-width="1"/><path d="M853.5 551l5.6-5v12l-5.6 5z" fill="#8cc860" opacity="0.55"/><rect x="800.3" y="595" width="15" height="6.3" rx="2.5" fill="#6f8fd8" opacity="0.55"/>
<circle cx="840.7" cy="620.7" r="18.3" fill="none" stroke="#e8e8e8" stroke-width="2"/>
<circle cx="840.7" cy="620.7" r="11" fill="none" stroke="#ffffff" stroke-width="1.7" stroke-dasharray="4 3"/><circle cx="840.7" cy="620.7" r="11" fill="none" stroke="#d04050" stroke-width="1.7" stroke-dasharray="3 4" stroke-dashoffset="3.5"/>
<path d="M840.7 596.5v10M840.7 633v10.5M817 618.5l8 1M856 622l8.5 1.2M832.5 629.5l-4 4.5M848.5 611.5l4-4.5" stroke="#1e1e1e" stroke-width="1.2"/>
<circle cx="840.7" cy="620.7" r="3" fill="#f0a030" stroke="#222" stroke-width="0.9"/>
</svg>
</div>
<div style="position:absolute;left:2px;top:63px;width:1583px;height:32px;background:#363636;border-radius:7px 7px 0 0px;"></div>
<div style="position:absolute;left:2px;top:95px;width:384.3px;height:30.6px;background:#383838;border-radius:0 0 6px 0px;"></div>
<div style="position:absolute;left:1486px;top:95px;width:99px;height:30.6px;background:#383838;border-radius:0 0 0 6pxpx;"></div>
<div style="position:absolute;left:12px;top:68px;width:38px;height:22px;background:#282828;border-radius:5px;box-shadow:inset 0 0 0 1px #2c2c2c"></div>
<svg style="position:absolute;left:0px;top:60px;" width="60" height="35" viewBox="0 0 60 35"><path d="M17.2 22.7h17.8M18.6 17.5h6.6M22.4 15.2l-2 11.5M31.3 20.4v6.3" stroke="#e0e0e0" stroke-width="1.3"/><circle cx="30.4" cy="13.5" r="4.4" fill="#e6e6e6"/><path d="M28.2 12.8a2.5 2.5 0 0 1 2.6-2" stroke="#555" stroke-width="0.9" fill="none"/></svg>
<svg style="position:absolute;left:38.5px;top:76.5px;" width="9" height="7" viewBox="0 0 9 7"><path d="M1 1.5l3.6 3.6l3.6-3.6" fill="none" stroke="#cfcfcf" stroke-width="1.25" stroke-linecap="round" stroke-linejoin="round"/></svg>
<div style="position:absolute;left:58px;top:68px;width:135px;height:22px;background:#282828;border-radius:5px;box-shadow:inset 0 0 0 1px #2c2c2c"></div>
<svg style="position:absolute;left:60px;top:68px;" width="26" height="22" viewBox="0 0 26 22"><rect x="7.2" y="5.5" width="9.8" height="9.8" fill="#e6e6e6"/><path d="M3.7 5.5V2.8h3.5M17 2.8h3.5v2.7M20.5 16.3V19h-3.5M7.2 19H3.7v-2.7" fill="none" stroke="#cfcfcf" stroke-width="1.2"/></svg>
<div style="position:absolute;left:90px;top:70.63px;font-size:14.5px;line-height:14.5px;color:#e6e6e6;white-space:pre;">Object Mode</div>
<svg style="position:absolute;left:181px;top:77px;" width="9" height="7" viewBox="0 0 9 7"><path d="M1 1.5l3.6 3.6l3.6-3.6" fill="none" stroke="#cfcfcf" stroke-width="1.25" stroke-linecap="round" stroke-linejoin="round"/></svg>
<div style="position:absolute;left:209px;top:70.63px;font-size:14.5px;line-height:14.5px;color:#e0e0e0;white-space:pre;">View</div>
<div style="position:absolute;left:259px;top:70.63px;font-size:14.5px;line-height:14.5px;color:#e0e0e0;white-space:pre;">Select</div>
<div style="position:absolute;left:319.8px;top:70.63px;font-size:14.5px;line-height:14.5px;color:#e0e0e0;white-space:pre;">Add</div>
<div style="position:absolute;left:366px;top:70.63px;font-size:14.5px;line-height:14.5px;color:#e0e0e0;white-space:pre;">Object</div>
<div style="position:absolute;left:637px;top:67.5px;width:98px;height:22.5px;background:#282828;border-radius:5px;box-shadow:inset 0 0 0 1px #2c2c2c"></div>
<svg style="position:absolute;left:636px;top:64px;" width="40" height="30" viewBox="0 0 40 30"><path d="M9.6 17.2V6.3M6.5 9.2l3.1-3.1l3.1 3.1M11.8 20.3h11.2M20.2 17.3l3 3l-3 3" fill="none" stroke="#e6e6e6" stroke-width="1.4"/><path d="M12.2 17l7-7.2M15.3 9.6h4.1v4.1" fill="none" stroke="#b4b4b4" stroke-width="1.3"/><circle cx="9.6" cy="19.4" r="2.1" fill="#282828" stroke="#e6e6e6" stroke-width="1.3"/></svg>
<div style="position:absolute;left:669.5px;top:70.63px;font-size:14.5px;line-height:14.5px;color:#e6e6e6;white-space:pre;">Global</div>
<svg style="position:absolute;left:722px;top:77px;" width="9" height="7" viewBox="0 0 9 7"><path d="M1 1.5l3.6 3.6l3.6-3.6" fill="none" stroke="#cfcfcf" stroke-width="1.25" stroke-linecap="round" stroke-linejoin="round"/></svg>
<div style="position:absolute;left:743px;top:67.5px;width:38px;height:22.5px;background:#282828;border-radius:5px;box-shadow:inset 0 0 0 1px #2c2c2c"></div>
<svg style="position:absolute;left:735px;top:62px;" width="40" height="32" viewBox="0 0 40 32"><path d="M22.2 16.5a5 5 0 1 1 6.8 4.9" fill="none" stroke="#e0e0e0" stroke-width="1.5"/><path d="M21.6 13.8a5.5 5.5 0 1 0 2.6 8.2" fill="none" stroke="#e0e0e0" stroke-width="1.5"/><circle cx="22.8" cy="15.8" r="2.1" fill="#e8e8e8"/></svg>
<svg style="position:absolute;left:769px;top:77px;" width="9" height="7" viewBox="0 0 9 7"><path d="M1 1.5l3.6 3.6l3.6-3.6" fill="none" stroke="#cfcfcf" stroke-width="1.25" stroke-linecap="round" stroke-linejoin="round"/></svg>
<div style="position:absolute;left:789px;top:67.5px;width:63px;height:22.5px;background:#282828;border-radius:5px;box-shadow:inset 0 0 0 1px #2c2c2c"></div>
<div style="position:absolute;left:789px;top:67.5px;width:23.5px;height:22.5px;background:#4b4b4b;border-radius:5px 0 0 5pxpx;"></div>
<svg style="position:absolute;left:785px;top:62px;" width="32" height="32" viewBox="0 0 32 32"><g transform="rotate(-45 16 16)"><path d="M11.5 9v7.5a4.5 4.5 0 0 0 9 0V9" fill="none" stroke="#a8a8a8" stroke-width="5"/><path d="M11.5 10.2v6.3a4.5 4.5 0 0 0 9 0v-6.3" fill="none" stroke="#4b4b4b" stroke-width="2.4"/></g></svg>
<svg style="position:absolute;left:813px;top:68px;" width="28" height="22" viewBox="0 0 28 22"><path d="M2 11v7M2 14.5h14M6 12v5M10 12v5M15 11v7" stroke="#d6d6d6" stroke-width="1.2"/><rect x="12" y="4" width="4" height="4" fill="#e6e6e6"/></svg>
<svg style="position:absolute;left:838px;top:77px;" width="9" height="7" viewBox="0 0 9 7"><path d="M1 1.5l3.6 3.6l3.6-3.6" fill="none" stroke="#cfcfcf" stroke-width="1.25" stroke-linecap="round" stroke-linejoin="round"/></svg>
<div style="position:absolute;left:860px;top:67.5px;width:62px;height:22.5px;background:#282828;border-radius:5px;box-shadow:inset 0 0 0 1px #2c2c2c"></div>
<div style="position:absolute;left:860px;top:67.5px;width:23.3px;height:22.5px;background:#4b4b4b;border-radius:5px 0 0 5pxpx;"></div>
<svg style="position:absolute;left:860px;top:68px;" width="24" height="22" viewBox="0 0 24 22"><circle cx="11.5" cy="11" r="6" fill="none" stroke="#8e8e8e" stroke-width="1.2"/><circle cx="11.5" cy="11" r="2.2" fill="#b8b8b8"/></svg>
<svg style="position:absolute;left:887px;top:68px;" width="24" height="22" viewBox="0 0 24 22"><path d="M2 18c4 0 5-13 7-13s3 13 7 13" fill="none" stroke="#a8a8a8" stroke-width="1.2"/></svg>
<svg style="position:absolute;left:909px;top:77px;" width="9" height="7" viewBox="0 0 9 7"><path d="M1 1.5l3.6 3.6l3.6-3.6" fill="none" stroke="#666" stroke-width="1.25" stroke-linecap="round" stroke-linejoin="round"/></svg>
<div style="position:absolute;left:1266px;top:67px;width:38px;height:23px;background:#282828;border-radius:5px;box-shadow:inset 0 0 0 1px #2c2c2c"></div>
<svg style="position:absolute;left:1260px;top:62px;" width="40" height="32" viewBox="0 0 40 32"><path d="M12.6 12.2c3.6-5.4 9.8-5.4 13.4 0c-3.6 5.4-9.8 5.4-13.4 0z" fill="none" stroke="#e6e6e6" stroke-width="1.7"/><circle cx="19.3" cy="12.2" r="2.4" fill="#e6e6e6"/><path d="M9.3 15.5l9.4 3.8l-3.7 1.3l2.9 4.3l-1.9 1.3l-2.9-4.3l-2.4 2.9z" fill="#e6e6e6"/></svg>
<svg style="position:absolute;left:1292px;top:77px;" width="9" height="7" viewBox="0 0 9 7"><path d="M1 1.5l3.6 3.6l3.6-3.6" fill="none" stroke="#cfcfcf" stroke-width="1.25" stroke-linecap="round" stroke-linejoin="round"/></svg>
<div style="position:absolute;left:1312px;top:67px;width:48px;height:23px;background:#282828;border-radius:5px;box-shadow:inset 0 0 0 1px #2c2c2c"></div>
<div style="position:absolute;left:1312px;top:67px;width:23.5px;height:23px;background:#4772b3;border-radius:5px 0 0 5pxpx;"></div>
<svg style="position:absolute;left:1312px;top:62px;" width="24" height="32" viewBox="0 0 24 32"><path d="M3.2 10.4a14 14 0 0 1 14 14" fill="none" stroke="#f0f0f0" stroke-width="1.5"/><circle cx="5.3" cy="22.4" r="2.2" fill="none" stroke="#f0f0f0" stroke-width="1.4"/><path d="M6.9 20.8l12.8-11.9M14.7 8.9h5v5" fill="none" stroke="#f0f0f0" stroke-width="1.5"/></svg>
<svg style="position:absolute;left:1343px;top:77px;" width="9" height="7" viewBox="0 0 9 7"><path d="M1 1.5l3.6 3.6l3.6-3.6" fill="none" stroke="#cfcfcf" stroke-width="1.25" stroke-linecap="round" stroke-linejoin="round"/></svg>
<div style="position:absolute;left:1368px;top:67px;width:48px;height:23px;background:#282828;border-radius:5px;box-shadow:inset 0 0 0 1px #2c2c2c"></div>
<div style="position:absolute;left:1368px;top:67px;width:23.5px;height:23px;background:#4772b3;border-radius:5px 0 0 5pxpx;"></div>
<svg style="position:absolute;left:1368px;top:62px;" width="24" height="32" viewBox="0 0 24 32"><circle cx="14" cy="14.6" r="5.8" fill="#f0f0f0"/><path d="M7.5 12.2a6.8 6.8 0 1 0 8.3 9.8" fill="none" stroke="#f0f0f0" stroke-width="1.5"/><path d="M11.5 12l2.3 3.5" stroke="#4772b3" stroke-width="1"/></svg>
<svg style="position:absolute;left:1399px;top:77px;" width="9" height="7" viewBox="0 0 9 7"><path d="M1 1.5l3.6 3.6l3.6-3.6" fill="none" stroke="#cfcfcf" stroke-width="1.25" stroke-linecap="round" stroke-linejoin="round"/></svg>
<div style="position:absolute;left:1424px;top:67px;width:23px;height:23px;background:#474747;border-radius:5px;"></div>
<svg style="position:absolute;left:1424px;top:67px;" width="23" height="23" viewBox="0 0 23 23"><rect x="4" y="8" width="11" height="11" fill="none" stroke="#d6d6d6" stroke-width="1.2"/><path d="M8 8V4h11v11h-4" fill="none" stroke="#d6d6d6" stroke-width="1.2"/><path d="M9 11v3h3" fill="none" stroke="#d6d6d6" stroke-width="1.2"/></svg>
<div style="position:absolute;left:1455px;top:67px;width:120px;height:23px;background:#282828;border-radius:5px;box-shadow:inset 0 0 0 1px #2c2c2c"></div>
<div style="position:absolute;left:1455px;top:67px;width:95px;height:23px;background:#484848;border-radius:5px 0 0 5pxpx;"></div>
<div style="position:absolute;left:1478.4px;top:67px;width:24px;height:23px;background:#4772b3;border-radius:0px;"></div>
<svg style="position:absolute;left:0px;top:0px;pointer-events:none" width="1590" height="100" viewBox="0 0 1590 100"><circle cx="1466.7" cy="78.3" r="8.2" fill="none" stroke="#d8d8d8" stroke-width="1.4"/><path d="M1466.7 70v16.6M1458.5 78.3h16.4" stroke="#d8d8d8" stroke-width="1.3"/><circle cx="1490.4" cy="78.3" r="8.5" fill="#ffffff"/><circle cx="1514.2" cy="78.3" r="8.2" fill="none" stroke="#d8d8d8" stroke-width="1.4"/><path d="M1514.2 70.1v8.2h-8.2a8.2 8.2 0 0 1 8.2-8.2z" fill="#cfcfcf"/><path d="M1514.2 70.1v8.2M1506 78.3l3 4M1517 80.5l2.5 3.5M1519.5 79l2.2 3" stroke="#cfcfcf" stroke-width="1.2"/><circle cx="1538.3" cy="78.3" r="8.2" fill="none" stroke="#d8d8d8" stroke-width="1.4"/><path d="M1533.5 76a5 5 0 0 1 4-4" stroke="#d8d8d8" stroke-width="2.2" stroke-linecap="round" fill="none"/><path d="M1540 82l2.5 3M1542.5 80l2.5 3M1537 83.5l2 2.5" stroke="#cfcfcf" stroke-width="1.1"/></svg>
<div style="position:absolute;left:1477.9px;top:67px;width:1px;height:23px;background:#353535;border-radius:0px;"></div>
<div style="position:absolute;left:1501.8px;top:67px;width:1px;height:23px;background:#353535;border-radius:0px;"></div>
<div style="position:absolute;left:1525.8px;top:67px;width:1px;height:23px;background:#353535;border-radius:0px;"></div>
<div style="position:absolute;left:1549.7px;top:67px;width:1px;height:23px;background:#353535;border-radius:0px;"></div>
<svg style="position:absolute;left:1558px;top:77px;" width="9" height="7" viewBox="0 0 9 7"><path d="M1 1.5l3.6 3.6l3.6-3.6" fill="none" stroke="#cfcfcf" stroke-width="1.25" stroke-linecap="round" stroke-linejoin="round"/></svg>
<div style="position:absolute;left:11px;top:103.23px;font-size:14.5px;line-height:14.5px;color:#cfcfcf;white-space:pre;">Orientation:</div>
<div style="position:absolute;left:93.6px;top:99.4px;width:122px;height:22px;background:#282828;border-radius:5px;box-shadow:inset 0 0 0 1px #2c2c2c"></div>
<svg style="position:absolute;left:96px;top:99px;" width="28" height="22" viewBox="0 0 28 22"><path d="M8 3v9M6 5l2-2l2 2M10 16h9M17 14l2 2l-2 2M6 17l-3 3" fill="none" stroke="#d0d0d0" stroke-width="1.1"/><circle cx="8" cy="15" r="2.3" fill="#e6e6e6"/></svg>
<div style="position:absolute;left:125px;top:103.23px;font-size:14.5px;line-height:14.5px;color:#e6e6e6;white-space:pre;">Default</div>
<svg style="position:absolute;left:200px;top:108px;" width="9" height="7" viewBox="0 0 9 7"><path d="M1 1.5l3.6 3.6l3.6-3.6" fill="none" stroke="#cfcfcf" stroke-width="1.25" stroke-linecap="round" stroke-linejoin="round"/></svg>
<div style="position:absolute;left:234px;top:103.23px;font-size:14.5px;line-height:14.5px;color:#cfcfcf;white-space:pre;">Drag:</div>
<div style="position:absolute;left:281px;top:99.4px;width:95px;height:22px;background:#282828;border-radius:5px;box-shadow:inset 0 0 0 1px #2c2c2c"></div>
<div style="position:absolute;left:290px;top:103.23px;font-size:14.5px;line-height:14.5px;color:#e6e6e6;white-space:pre;">Select Box</div>
<svg style="position:absolute;left:362px;top:108px;" width="9" height="7" viewBox="0 0 9 7"><path d="M1 1.5l3.6 3.6l3.6-3.6" fill="none" stroke="#cfcfcf" stroke-width="1.25" stroke-linecap="round" stroke-linejoin="round"/></svg>
<div style="position:absolute;left:1497px;top:99.8px;width:79px;height:21.3px;background:#282828;border-radius:5px;box-shadow:inset 0 0 0 1px #2c2c2c"></div>
<div style="position:absolute;left:1506px;top:103.23px;font-size:14.5px;line-height:14.5px;color:#e6e6e6;white-space:pre;">Options</div>
<svg style="position:absolute;left:1562px;top:108px;" width="9" height="7" viewBox="0 0 9 7"><path d="M1 1.5l3.6 3.6l3.6-3.6" fill="none" stroke="#cfcfcf" stroke-width="1.25" stroke-linecap="round" stroke-linejoin="round"/></svg>
<div style="position:absolute;left:11px;top:137px;width:48px;height:83px;background:#282828;border-radius:6px;"></div>
<div style="position:absolute;left:11px;top:229px;width:48px;height:169px;background:#282828;border-radius:6px;"></div>
<div style="position:absolute;left:11px;top:229.3px;width:48px;height:40.5px;background:#4772b3;border-radius:6px 6px 0 0px;"></div>
<div style="position:absolute;left:11px;top:407.6px;width:48px;height:82px;background:#282828;border-radius:6px;"></div>
<div style="position:absolute;left:11px;top:499.4px;width:48px;height:39.6px;background:#282828;border-radius:6px;"></div>
<div style="position:absolute;left:11px;top:177.4px;width:48px;height:1px;background:#1e1e1e;border-radius:0px;"></div>
<div style="position:absolute;left:11px;top:269.8px;width:48px;height:1px;background:#1e1e1e;border-radius:0px;"></div>
<div style="position:absolute;left:11px;top:313.3px;width:48px;height:1px;background:#1e1e1e;border-radius:0px;"></div>
<div style="position:absolute;left:11px;top:355.8px;width:48px;height:1px;background:#1e1e1e;border-radius:0px;"></div>
<div style="position:absolute;left:11px;top:448px;width:48px;height:1px;background:#1e1e1e;border-radius:0px;"></div>
<svg style="position:absolute;left:0px;top:0px;" width="70" height="560" viewBox="0 0 70 560"><rect x="21.8" y="143.4" width="26.5" height="26.5" fill="none" stroke="#d8c4a0" stroke-width="1.5" stroke-dasharray="3 2.3"/><path d="M31.2 150v14.3l3-3.2l2.4 4.6l1.8-0.9l-2.3-4.4h4.6z" fill="#e6e6e6"/><path d="M55.8 170.8v4.5h-4.5z" fill="#a0a0a0"/><circle cx="35" cy="200" r="13.5" fill="none" stroke="#f2f2f2" stroke-width="1.8"/><circle cx="35" cy="200" r="13.5" fill="none" stroke="#8a2f3c" stroke-width="1.9" stroke-dasharray="5.3 5.3" stroke-dashoffset="2.6"/><path d="M26.3 200h6.2M37.5 200h6.2M35 190.8v6.2M35 203v5.8" stroke="#a8a8a8" stroke-width="1.5"/><path d="M35 234l3.8 5.4h-7.6zM35 263.6l3.8-5.4h-7.6zM20.4 248.8l5.4-3.8v7.6zM49.6 248.8l-5.4-3.8v7.6z" fill="#ececec"/><path d="M35 241v3.5M35 253v3.5M27.5 248.8h3.5M39 248.8h3.5" stroke="#ececec" stroke-width="1.8"/><path d="M24.2 290a11.5 11.5 0 0 1 20-6M45.8 294.5a11.5 11.5 0 0 1-20 6" fill="none" stroke="#e6e6e6" stroke-width="1.5"/><path d="M35 287.8l4.4 4.4l-4.4 4.4l-4.4-4.4z" fill="#b4b4b4"/><path d="M20.5 291h6.6l-3.3 6zM43 293.5h6.6l-3.3-6z" fill="#e6e6e6"/><path d="M25.2 334v-8.4h19.6v19h-9.2" fill="none" stroke="#e6e6e6" stroke-width="1.5"/><rect x="23.8" y="335" width="11.2" height="10.8" fill="#e6e6e6"/><path d="M36.8 333.8l5-5" stroke="#e6e6e6" stroke-width="1.6"/><path d="M43 327.2v5.5l-5.5-5.5z" fill="#e6e6e6"/><path d="M55.8 348.8v4.5h-4.5z" fill="#a0a0a0"/><circle cx="35" cy="377.9" r="12" fill="none" stroke="#e6e6e6" stroke-width="1.5" stroke-dasharray="13.5 5.35" stroke-dashoffset="-2.7"/><rect x="30" y="372.9" width="10" height="10" fill="#e6e6e6"/><path d="M35 364.8l3.4 4.3h-6.8zM35 391l3.4-4.3h-6.8zM21.9 377.9l4.3-3.4v6.8zM48.1 377.9l-4.3-3.4v6.8z" fill="#e6e6e6"/><path d="M21.5 433.5l1.2-4.3l15.5-15.5l3.4 3.4l-15.5 15.5z" fill="#e6e6e6"/><path d="M35.3 416.6l3.4 3.4M24 427.8l3.4 3.4" stroke="#282828" stroke-width="0.9"/><path d="M22.3 436.2c5 3 10 0 13-3.2c3.5-3.8 9.5-5 14.6 2.8" fill="none" stroke="#9ad8b8" stroke-width="1.5"/><path d="M55.8 440.6v4.5h-4.5z" fill="#a0a0a0"/><path d="M30.5 464.5a16 16 0 0 1 15.8 15.8h-15.8z" fill="#8fdcb0"/><path d="M30.5 462.5a18 18 0 0 1 17.8 17.8" fill="none" stroke="#b8e8cc" stroke-width="1"/><path d="M25.5 456.3v27.2h23.5" fill="none" stroke="#f0f0f0" stroke-width="2.6"/><path d="M24 456.3h5" stroke="#f0f0f0" stroke-width="1.5"/><path d="M26.8 459.0h2.6" stroke="#f0f0f0" stroke-width="0.9"/><path d="M26.8 461.6h2.6" stroke="#f0f0f0" stroke-width="0.9"/><path d="M26.8 464.2h2.6" stroke="#f0f0f0" stroke-width="0.9"/><path d="M26.8 466.8h2.6" stroke="#f0f0f0" stroke-width="0.9"/><path d="M26.8 469.4h2.6" stroke="#f0f0f0" stroke-width="0.9"/><path d="M26.8 472.0h2.6" stroke="#f0f0f0" stroke-width="0.9"/><path d="M26.8 474.6h2.6" stroke="#f0f0f0" stroke-width="0.9"/><path d="M26.8 477.2h2.6" stroke="#f0f0f0" stroke-width="0.9"/><path d="M30.0 482.2v-2.4" stroke="#f0f0f0" stroke-width="0.9"/><path d="M32.3 482.2v-2.4" stroke="#f0f0f0" stroke-width="0.9"/><path d="M34.6 482.2v-2.4" stroke="#f0f0f0" stroke-width="0.9"/><path d="M36.9 482.2v-2.4" stroke="#f0f0f0" stroke-width="0.9"/><path d="M39.2 482.2v-2.4" stroke="#f0f0f0" stroke-width="0.9"/><path d="M41.5 482.2v-2.4" stroke="#f0f0f0" stroke-width="0.9"/><path d="M43.8 482.2v-2.4" stroke="#f0f0f0" stroke-width="0.9"/><path d="M46.1 482.2v-2.4" stroke="#f0f0f0" stroke-width="0.9"/><path d="M48.4 482.2v-2.4" stroke="#f0f0f0" stroke-width="0.9"/><path d="M23.9 503.6v8.8M19.5 508h8.8" stroke="#a8e8c0" stroke-width="1.9"/><path d="M26.1 515.5h17v17h-17zM26.1 515.5l5.8-5.8h17.6v17.2l-6.4 5.6M43.1 515.5l6.4-5.8" fill="none" stroke="#a6d6bc" stroke-width="1.1" stroke-linejoin="round"/><path d="M56.2 532.5v4.5h-4.5z" fill="#a0a0a0"/></svg>
<div style="position:absolute;left:81px;top:138.23px;font-size:14.5px;line-height:14.5px;color:#ececec;white-space:pre;text-shadow:0 0 2px #000">User Perspective</div>
<div style="position:absolute;left:81px;top:160.23px;font-size:14.5px;line-height:14.5px;color:#ececec;white-space:pre;text-shadow:0 0 2px #000">(1) Collection | Cube</div>
<svg style="position:absolute;left:0px;top:0px;pointer-events:none" width="1590" height="400" viewBox="0 0 1590 400"><path d="M1523 188V159" stroke="#5a8ad8" stroke-width="2.2"/><path d="M1523 188L1496 185" stroke="#84b03c" stroke-width="2.2"/><path d="M1523 188L1530 181" stroke="#c64050" stroke-width="2.2"/><circle cx="1523.3" cy="226.3" r="9.3" fill="#445062" stroke="#4f7bc0" stroke-width="1.3"/><circle cx="1509" cy="198.3" r="10.3" fill="#6e3c46" stroke="#e04f60" stroke-width="1.6"/><circle cx="1560.3" cy="191.3" r="9.5" fill="#5a6a3a" stroke="#a8c838" stroke-width="1.8"/><circle cx="1522.5" cy="149.5" r="10" fill="#3f85e0"/><text x="1522.5" y="154.5" font-size="13" font-weight="bold" text-anchor="middle" fill="#16213a" font-family="Liberation Sans">Z</text><circle cx="1536.8" cy="177.5" r="9.5" fill="#c83a4e"/><text x="1536.8" y="182" font-size="13" font-weight="bold" text-anchor="middle" fill="#3a0d14" font-family="Liberation Sans">X</text><circle cx="1485.5" cy="184.5" r="10" fill="#7cb82e"/><text x="1485.5" y="189.3" font-size="13" font-weight="bold" text-anchor="middle" fill="#1e3408" font-family="Liberation Sans">Y</text><circle cx="1557" cy="256.5" r="16.8" fill="#2e2e2e" opacity="0.92"/><circle cx="1557" cy="294" r="16.8" fill="#2e2e2e" opacity="0.92"/><circle cx="1557" cy="331.5" r="16.8" fill="#2e2e2e" opacity="0.92"/><circle cx="1557" cy="369" r="16.8" fill="#2e2e2e" opacity="0.92"/><circle cx="1558.8" cy="255.6" r="7.6" fill="#e6e6e6"/><path d="M1558.8 251.2v8.8M1554.4 255.6h8.8" stroke="#2e2e2e" stroke-width="1.5"/><path d="M1553.5 260.8l-5.2 5.2" stroke="#e6e6e6" stroke-width="2.6" stroke-linecap="round"/><path d="M1549.3 293.6c-0.8-1.3 0.6-2.8 2-1.8l2.2 1.9l-0.8-7.6c-0.1-1.5 2.3-1.7 2.5-0.2l0.9 6.2l0.3-7.5c0.1-1.6 2.4-1.6 2.5 0l0.3 7.5l1.2-6.6c0.3-1.5 2.5-1.2 2.3 0.3l-0.9 7l1.8-4.2c0.6-1.3 2.6-0.7 2.1 0.7l-2.2 7.8c-0.9 3.4-3.4 5.4-6.8 5.4c-2.6 0-4.3-1.3-5.6-3.2z" fill="#e6e6e6"/><circle cx="1552" cy="328.8" r="4.6" fill="#e6e6e6"/><circle cx="1560.2" cy="326.8" r="5.6" fill="#e6e6e6"/><circle cx="1552" cy="328.8" r="1.1" fill="#2e2e2e"/><path d="M1558.6 326.8h3.2" stroke="#2e2e2e" stroke-width="1.1"/><rect x="1550.2" y="333.6" width="12.2" height="8.2" fill="#e6e6e6"/><path d="M1547.6 335.5h2.6v4.4h-2.6z" fill="#e6e6e6"/><path d="M1562.2 337.6l5-3.2v7.4z" fill="#e6e6e6"/><path d="M1551.2 361.5h11.3l3.6 15.8h-18.5z" fill="none" stroke="#e6e6e6" stroke-width="1.7" stroke-linejoin="round"/><path d="M1549.3 366.8h15.1M1548.3 372.2h17.1M1554.9 361.5l-0.8 15.8M1558.8 361.5l0.8 15.8" stroke="#e6e6e6" stroke-width="1.7"/></svg>
<svg style="position:absolute;left:1574px;top:146px;" width="10" height="16" viewBox="0 0 10 16"><path d="M7 2l-5 6l5 6" fill="none" stroke="#9a9a9a" stroke-width="1.3"/></svg>
<div style="position:absolute;left:76px;top:942.5px;width:199px;height:28px;background:#1c1c1c;border-radius:5px;"></div>
<svg style="position:absolute;left:88px;top:951px;" width="7" height="11" viewBox="0 0 7 11"><path d="M1.5 1l4 4.5l-4 4.5" fill="none" stroke="#cfcfcf" stroke-width="1.3" stroke-linecap="round" stroke-linejoin="round"/></svg>
<div style="position:absolute;left:103px;top:950.73px;font-size:14.5px;line-height:14.5px;color:#c8c8c8;white-space:pre;">Resize</div>
<div style="position:absolute;left:2px;top:980px;width:1583px;height:74px;background:#303030;border-radius:7px;overflow:hidden">
</div>
<div style="position:absolute;left:2px;top:1010px;width:1583px;height:28px;background:#1d1d1d;border-radius:0px;"></div>
<div style="position:absolute;left:2px;top:1038px;width:1583px;height:16px;background:#1d1d1d;border-radius:0 0 7px 7pxpx;"></div>
<div style="position:absolute;left:11px;top:985px;width:38px;height:23px;background:#282828;border-radius:5px;box-shadow:inset 0 0 0 1px #2c2c2c"></div>
<svg style="position:absolute;left:14px;top:985px;" width="26" height="23" viewBox="0 0 26 23"><circle cx="11" cy="11.5" r="7" fill="#e6e6e6"/><path d="M12 7l-4 4.5l4 4.5" fill="none" stroke="#1f1f1f" stroke-width="1.6"/></svg>
<svg style="position:absolute;left:37px;top:994px;" width="9" height="7" viewBox="0 0 9 7"><path d="M1 1.5l3.6 3.6l3.6-3.6" fill="none" stroke="#cfcfcf" stroke-width="1.25" stroke-linecap="round" stroke-linejoin="round"/></svg>
<div style="position:absolute;left:57px;top:985px;width:167px;height:23px;background:#282828;border-radius:5px;box-shadow:inset 0 0 0 1px #2c2c2c"></div>
<div style="position:absolute;left:147.7px;top:985px;width:1px;height:23px;background:#303030;border-radius:0px;"></div>
<div style="position:absolute;left:66px;top:988.73px;font-size:14.5px;line-height:14.5px;color:#e6e6e6;white-space:pre;">Playback</div>
<svg style="position:absolute;left:135px;top:995px;" width="9" height="7" viewBox="0 0 9 7"><path d="M1 1.5l3.6 3.6l3.6-3.6" fill="none" stroke="#cfcfcf" stroke-width="1.25" stroke-linecap="round" stroke-linejoin="round"/></svg>
<div style="position:absolute;left:158px;top:988.73px;font-size:14.5px;line-height:14.5px;color:#e6e6e6;white-space:pre;">Keying</div>
<svg style="position:absolute;left:211px;top:995px;" width="9" height="7" viewBox="0 0 9 7"><path d="M1 1.5l3.6 3.6l3.6-3.6" fill="none" stroke="#cfcfcf" stroke-width="1.25" stroke-linecap="round" stroke-linejoin="round"/></svg>
<div style="position:absolute;left:236px;top:988.73px;font-size:14.5px;line-height:14.5px;color:#e0e0e0;white-space:pre;">View</div>
<div style="position:absolute;left:286px;top:988.73px;font-size:14.5px;line-height:14.5px;color:#e0e0e0;white-space:pre;">Marker</div>
<div style="position:absolute;left:677.5px;top:985px;width:49px;height:23.5px;background:#282828;border-radius:5px;box-shadow:inset 0 0 0 1px #2c2c2c"></div>
<div style="position:absolute;left:677.5px;top:985px;width:24px;height:23.5px;background:#454545;border-radius:5px 0 0 5pxpx;"></div>
<svg style="position:absolute;left:677px;top:985px;" width="25" height="23" viewBox="0 0 25 23"><circle cx="12.5" cy="11.5" r="4.5" fill="#e6e6e6"/></svg>
<svg style="position:absolute;left:709px;top:995px;" width="9" height="7" viewBox="0 0 9 7"><path d="M1 1.5l3.6 3.6l3.6-3.6" fill="none" stroke="#777" stroke-width="1.25" stroke-linecap="round" stroke-linejoin="round"/></svg>
<div style="position:absolute;left:733.7px;top:985px;width:148px;height:23.5px;background:#424242;border-radius:5px;"></div>
<div style="position:absolute;left:758.5px;top:985px;width:1px;height:23.5px;background:#2e2e2e;border-radius:0px;"></div>
<div style="position:absolute;left:783.3000000000001px;top:985px;width:1px;height:23.5px;background:#2e2e2e;border-radius:0px;"></div>
<div style="position:absolute;left:808.1px;top:985px;width:1px;height:23.5px;background:#2e2e2e;border-radius:0px;"></div>
<div style="position:absolute;left:832.9000000000001px;top:985px;width:1px;height:23.5px;background:#2e2e2e;border-radius:0px;"></div>
<div style="position:absolute;left:857.7px;top:985px;width:1px;height:23.5px;background:#2e2e2e;border-radius:0px;"></div>
<svg style="position:absolute;left:0px;top:0px;pointer-events:none" width="900" height="1080" viewBox="0 0 900 1080"><rect x="738.8" y="990" width="3.3" height="12.8" fill="#e6e6e6"/><path d="M743.3 996.6l7.5-5v10z" fill="#e6e6e6"/><path d="M765.4 989.9l5.4 6.7l-5.4 6.7l-5.4-6.7z" fill="#e6e6e6"/><path d="M772.9 996.6l6.3-5v10z" fill="#e6e6e6"/><path d="M788.8 996.6l12.5-7.9v15.8z" fill="#e6e6e6"/><path d="M826.3 996.6l-12.5-7.9v15.8z" fill="#e6e6e6"/><path d="M842.1 996.6l-6.3-5v10z" fill="#e6e6e6"/><path d="M849.6 989.9l5.4 6.7l-5.4 6.7l-5.4-6.7z" fill="#e6e6e6"/><path d="M872.1 996.6l-7.1-5v10z" fill="#e6e6e6"/><rect x="873.8" y="990" width="2.8" height="12.8" fill="#e6e6e6"/></svg>
<div style="position:absolute;left:1233.5px;top:985px;width:91.5px;height:23.5px;background:#454545;border-radius:5px;"></div>
<div style="position:absolute;left:1079px;width:400px;top:988.73px;font-size:14.5px;line-height:14.5px;color:#e6e6e6;white-space:pre;text-align:center;">1</div>
<div style="position:absolute;left:1332.5px;top:985px;width:243px;height:23.5px;background:#454545;border-radius:5px;"></div>
<div style="position:absolute;left:1332.5px;top:985px;width:24px;height:23.5px;background:#3a3a3a;border-radius:5px 0 0 5pxpx;"></div>
<div style="position:absolute;left:1467.5px;top:985px;width:1.5px;height:23.5px;background:#303030;border-radius:0px;"></div>
<svg style="position:absolute;left:1332px;top:985px;" width="25" height="23" viewBox="0 0 25 23"><circle cx="12.5" cy="12.5" r="6.5" fill="none" stroke="#e6e6e6" stroke-width="1.3"/><path d="M12.5 9v4l2 2M10 4h5M17.5 5.5l2 2" fill="none" stroke="#e6e6e6" stroke-width="1.3"/></svg>
<div style="position:absolute;left:1376px;top:988.73px;font-size:14.5px;line-height:14.5px;color:#e6e6e6;white-space:pre;">Start</div>
<div style="position:absolute;right:469px;top:988.73px;font-size:14.5px;line-height:14.5px;color:#e6e6e6;white-space:pre;text-align:right;">1</div>
<div style="position:absolute;left:1487px;top:988.73px;font-size:14.5px;line-height:14.5px;color:#e6e6e6;white-space:pre;">End</div>
<div style="position:absolute;right:362px;top:988.73px;font-size:14.5px;line-height:14.5px;color:#e6e6e6;white-space:pre;text-align:right;">250</div>
<div style="position:absolute;left:-88.28999999999999px;width:400px;top:1019.15px;font-size:14px;line-height:14px;color:#cfcfcf;white-space:pre;text-align:center;">10</div>
<div style="position:absolute;left:-29.389999999999986px;width:400px;top:1019.15px;font-size:14px;line-height:14px;color:#cfcfcf;white-space:pre;text-align:center;">20</div>
<div style="position:absolute;left:29.50999999999999px;width:400px;top:1019.15px;font-size:14px;line-height:14px;color:#cfcfcf;white-space:pre;text-align:center;">30</div>
<div style="position:absolute;left:88.40999999999997px;width:400px;top:1019.15px;font-size:14px;line-height:14px;color:#cfcfcf;white-space:pre;text-align:center;">40</div>
<div style="position:absolute;left:147.30999999999995px;width:400px;top:1019.15px;font-size:14px;line-height:14px;color:#cfcfcf;white-space:pre;text-align:center;">50</div>
<div style="position:absolute;left:206.20999999999998px;width:400px;top:1019.15px;font-size:14px;line-height:14px;color:#cfcfcf;white-space:pre;text-align:center;">60</div>
<div style="position:absolute;left:265.10999999999996px;width:400px;top:1019.15px;font-size:14px;line-height:14px;color:#cfcfcf;white-space:pre;text-align:center;">70</div>
<div style="position:absolute;left:324.01px;width:400px;top:1019.15px;font-size:14px;line-height:14px;color:#cfcfcf;white-space:pre;text-align:center;">80</div>
<div style="position:absolute;left:382.90999999999997px;width:400px;top:1019.15px;font-size:14px;line-height:14px;color:#cfcfcf;white-space:pre;text-align:center;">90</div>
<div style="position:absolute;left:441.81000000000006px;width:400px;top:1019.15px;font-size:14px;line-height:14px;color:#cfcfcf;white-space:pre;text-align:center;">100</div>
<div style="position:absolute;left:500.71000000000004px;width:400px;top:1019.15px;font-size:14px;line-height:14px;color:#cfcfcf;white-space:pre;text-align:center;">110</div>
<div style="position:absolute;left:559.61px;width:400px;top:1019.15px;font-size:14px;line-height:14px;color:#cfcfcf;white-space:pre;text-align:center;">120</div>
<div style="position:absolute;left:618.51px;width:400px;top:1019.15px;font-size:14px;line-height:14px;color:#cfcfcf;white-space:pre;text-align:center;">130</div>
<div style="position:absolute;left:677.41px;width:400px;top:1019.15px;font-size:14px;line-height:14px;color:#cfcfcf;white-space:pre;text-align:center;">140</div>
<div style="position:absolute;left:736.31px;width:400px;top:1019.15px;font-size:14px;line-height:14px;color:#cfcfcf;white-space:pre;text-align:center;">150</div>
<div style="position:absolute;left:795.21px;width:400px;top:1019.15px;font-size:14px;line-height:14px;color:#cfcfcf;white-space:pre;text-align:center;">160</div>
<div style="position:absolute;left:854.1099999999999px;width:400px;top:1019.15px;font-size:14px;line-height:14px;color:#cfcfcf;white-space:pre;text-align:center;">170</div>
<div style="position:absolute;left:913.01px;width:400px;top:1019.15px;font-size:14px;line-height:14px;color:#cfcfcf;white-space:pre;text-align:center;">180</div>
<div style="position:absolute;left:971.9100000000001px;width:400px;top:1019.15px;font-size:14px;line-height:14px;color:#cfcfcf;white-space:pre;text-align:center;">190</div>
<div style="position:absolute;left:1030.81px;width:400px;top:1019.15px;font-size:14px;line-height:14px;color:#cfcfcf;white-space:pre;text-align:center;">200</div>
<div style="position:absolute;left:1089.71px;width:400px;top:1019.15px;font-size:14px;line-height:14px;color:#cfcfcf;white-space:pre;text-align:center;">210</div>
<div style="position:absolute;left:1148.61px;width:400px;top:1019.15px;font-size:14px;line-height:14px;color:#cfcfcf;white-space:pre;text-align:center;">220</div>
<div style="position:absolute;left:1207.51px;width:400px;top:1019.15px;font-size:14px;line-height:14px;color:#cfcfcf;white-space:pre;text-align:center;">230</div>
<div style="position:absolute;left:1266.41px;width:400px;top:1019.15px;font-size:14px;line-height:14px;color:#cfcfcf;white-space:pre;text-align:center;">240</div>
<div style="position:absolute;left:1325.31px;width:400px;top:1019.15px;font-size:14px;line-height:14px;color:#cfcfcf;white-space:pre;text-align:center;">250</div>
<div style="position:absolute;left:43.3px;top:1015px;width:30px;height:21px;background:#4772b3;border-radius:5px;"></div>
<div style="position:absolute;left:-141.5px;width:400px;top:1019.15px;font-size:14px;line-height:14px;color:#ffffff;white-space:pre;text-align:center;">1</div>
<div style="position:absolute;left:58px;top:1036px;width:1.5px;height:18px;background:#4772b3;border-radius:0px;"></div>
<div style="position:absolute;left:12px;top:1040.8px;width:1563px;height:11.2px;background:#4e4e4e;border-radius:6px;"></div>
<svg style="position:absolute;left:12px;top:1041px;" width="12" height="11" viewBox="0 0 12 11"><circle cx="5" cy="5.5" r="3.8" fill="#333"/></svg>
<svg style="position:absolute;left:1563px;top:1041px;" width="12" height="11" viewBox="0 0 12 11"><circle cx="6" cy="5.5" r="3.8" fill="#333"/></svg>
<svg style="position:absolute;left:0px;top:1034px;" width="8" height="12" viewBox="0 0 8 12"><path d="M2 2l4 4l-4 4" fill="none" stroke="#8a8a8a" stroke-width="1.2"/></svg>
<svg style="position:absolute;left:1577px;top:1030px;" width="8" height="14" viewBox="0 0 8 14"><path d="M6 2l-4 5l4 5" fill="none" stroke="#8a8a8a" stroke-width="1.2"/></svg>
<div style="position:absolute;left:0px;top:1054px;width:1920px;height:26px;background:#181818;border-radius:0px;"></div>
<svg style="position:absolute;left:14px;top:1058px;" width="16" height="20" viewBox="0 0 16 20"><rect x="1.5" y="1.5" width="13" height="17" rx="5" fill="none" stroke="#d0d0d0" stroke-width="1.3"/><path d="M2 7V6a5 5 0 0 1 6-4.5V7z" fill="#d0d0d0"/></svg>
<svg style="position:absolute;left:295px;top:1058px;" width="16" height="20" viewBox="0 0 16 20"><rect x="1.5" y="1.5" width="13" height="17" rx="5" fill="none" stroke="#d0d0d0" stroke-width="1.3"/><rect x="6.5" y="4" width="3" height="5" rx="1" fill="#d0d0d0"/></svg>
<svg style="position:absolute;left:576px;top:1058px;" width="16" height="20" viewBox="0 0 16 20"><rect x="1.5" y="1.5" width="13" height="17" rx="5" fill="none" stroke="#d0d0d0" stroke-width="1.3"/><path d="M14 7V6a5 5 0 0 0-6-4.5V7z" fill="#d0d0d0"/></svg>
<div style="position:absolute;right:16.40000000000009px;top:1060.23px;font-size:14.5px;line-height:14.5px;color:#8c8c8c;white-space:pre;text-align:right;">4.0.2</div>
<div style="position:absolute;left:1588px;top:63px;width:332px;height:317px;background:#282828;border-radius:7px 0 0 7pxpx;"></div>
<div style="position:absolute;left:1588px;top:119.5px;width:332px;height:25px;background:#2b2b2b;border-radius:0px;"></div>
<div style="position:absolute;left:1588px;top:194.5px;width:332px;height:25px;background:#2b2b2b;border-radius:0px;"></div>
<div style="position:absolute;left:1588px;top:244.5px;width:332px;height:25px;background:#2b2b2b;border-radius:0px;"></div>
<div style="position:absolute;left:1588px;top:294.5px;width:332px;height:25px;background:#2b2b2b;border-radius:0px;"></div>
<div style="position:absolute;left:1588px;top:344.5px;width:332px;height:25px;background:#2b2b2b;border-radius:0px;"></div>
<div style="position:absolute;left:1599px;top:66.5px;width:38.5px;height:24px;background:#232323;border-radius:5px;border:1px solid #333;box-sizing:border-box"></div>
<svg style="position:absolute;left:1601px;top:67px;" width="26" height="23" viewBox="0 0 26 23"><rect x="5" y="4" width="6" height="3.5" fill="#e0e0e0"/><rect x="11" y="10" width="9" height="3.5" fill="#e0e0e0"/><rect x="11" y="15.5" width="9" height="3.5" fill="#e0e0e0"/><path d="M7.5 7.5v9.5h3.5M7.5 11.5h3.5" fill="none" stroke="#b0b0b0" stroke-width="1"/></svg>
<svg style="position:absolute;left:1625px;top:76px;" width="9" height="7" viewBox="0 0 9 7"><path d="M1 1.5l3.6 3.6l3.6-3.6" fill="none" stroke="#cfcfcf" stroke-width="1.25" stroke-linecap="round" stroke-linejoin="round"/></svg>
<div style="position:absolute;left:1645px;top:66.5px;width:38.5px;height:24px;background:#232323;border-radius:5px;border:1px solid #333;box-sizing:border-box"></div>
<svg style="position:absolute;left:1647px;top:67px;" width="26" height="23" viewBox="0 0 26 23"><rect x="8.8" y="3.5" width="10.5" height="9.8" fill="none" stroke="#e0e0e0" stroke-width="1.2"/><path d="M6.7 6v9.5h10.5M4.6 8.2v9.6h10.6" fill="none" stroke="#d0d0d0" stroke-width="1"/><path d="M9.5 12.8l3.2-5.2l3.3 5.2z" fill="#e0e0e0"/><circle cx="16.8" cy="6.3" r="1" fill="#e0e0e0"/></svg>
<svg style="position:absolute;left:1672px;top:76px;" width="9" height="7" viewBox="0 0 9 7"><path d="M1 1.5l3.6 3.6l3.6-3.6" fill="none" stroke="#cfcfcf" stroke-width="1.25" stroke-linecap="round" stroke-linejoin="round"/></svg>
<div style="position:absolute;left:1703.7px;top:66.5px;width:143px;height:24px;background:#1d1d1d;border-radius:5px;border:1px solid #333;box-sizing:border-box"></div>
<svg style="position:absolute;left:1706px;top:67px;" width="22" height="23" viewBox="0 0 22 23"><circle cx="12.5" cy="9.5" r="5" fill="none" stroke="#d0d0d0" stroke-width="1.4"/><path d="M9 13l-5 5" stroke="#d0d0d0" stroke-width="1.5"/></svg>
<div style="position:absolute;left:1866.8px;top:66.5px;width:39.3px;height:24px;background:#232323;border-radius:5px;border:1px solid #333;box-sizing:border-box"></div>
<svg style="position:absolute;left:1868px;top:67px;" width="24" height="23" viewBox="0 0 24 23"><path d="M4 4.5h16l-6 7.5v8l-4-3v-5z" fill="none" stroke="#e0e0e0" stroke-width="1.4" stroke-linejoin="round"/></svg>
<svg style="position:absolute;left:1893px;top:76px;" width="9" height="7" viewBox="0 0 9 7"><path d="M1 1.5l3.6 3.6l3.6-3.6" fill="none" stroke="#cfcfcf" stroke-width="1.25" stroke-linecap="round" stroke-linejoin="round"/></svg>
<div style="position:absolute;left:1912px;top:66px;width:8px;height:24px;background:#3a3a3a;border-radius:5px 0 0 5pxpx;"></div>
<svg style="position:absolute;left:1615px;top:99px;" width="20" height="18" viewBox="0 0 20 18"><rect x="1.5" y="0.5" width="17" height="4" fill="#e6e6e6"/><rect x="2.5" y="6" width="15" height="10" fill="#e6e6e6"/><rect x="7.5" y="8" width="5" height="1.6" rx="0.8" fill="#282828"/></svg>
<div style="position:absolute;left:1643.4px;top:101.73px;font-size:14.5px;line-height:14.5px;color:#e6e6e6;white-space:pre;">Scene Collection</div>
<svg style="position:absolute;left:1619px;top:128px;" width="12" height="10" viewBox="0 0 12 10"><path d="M1.5 1.5h8l-4 7z" fill="#c8c8c8"/></svg>
<div style="position:absolute;left:1638.4px;top:121.5px;width:24px;height:21.6px;background:#3a3a3a;border-radius:5px;border:1px solid #555;box-sizing:border-box"></div>
<svg style="position:absolute;left:1640px;top:123px;" width="20" height="18" viewBox="0 0 20 18"><rect x="2" y="1.5" width="16" height="4" fill="#e6e6e6"/><rect x="3" y="7" width="14" height="9.5" fill="#e6e6e6"/><rect x="8" y="9" width="4" height="1.6" rx="0.8" fill="#3a3a3a"/></svg>
<div style="position:absolute;left:1668.5px;top:126.73px;font-size:14.5px;line-height:14.5px;color:#e6e6e6;white-space:pre;">Collection</div>
<svg style="position:absolute;left:1838px;top:125px;" width="16" height="15" viewBox="0 0 16 15"><rect x="1" y="1" width="13" height="13" rx="2" fill="#e6e6e6"/><path d="M3.8 7.5l2.5 2.6l5-5.2" fill="none" stroke="#282828" stroke-width="1.8"/></svg>
<svg style="position:absolute;left:1860px;top:125px;" width="20" height="14" viewBox="0 0 20 14"><path d="M1.5 7c4-6.5 13-6.5 17 0c-4 6.5-13 6.5-17 0z" fill="#e6e6e6"/><circle cx="10" cy="7" r="3.2" fill="#282828"/><circle cx="10" cy="7" r="1.6" fill="#e6e6e6"/></svg>
<svg style="position:absolute;left:1886px;top:124px;" width="19" height="16" viewBox="0 0 19 16"><path d="M1 4h4l2-3h5l2 3h4v11H1z" fill="#e6e6e6"/><circle cx="9.5" cy="9" r="4" fill="#282828"/><circle cx="9.5" cy="9" r="2.3" fill="#e6e6e6"/></svg>
<div style="position:absolute;left:1588px;top:145px;width:332px;height:24.7px;background:#334d80;border-radius:0px;"></div>
<div style="position:absolute;left:1624px;top:148px;width:1px;height:18px;background:#5a6a8a;border-radius:0px;"></div>
<svg style="position:absolute;left:1645px;top:153px;" width="10" height="10" viewBox="0 0 10 10"><path d="M1.5 1l7 4l-7 4z" fill="#c8c8d8"/></svg>
<div style="position:absolute;left:1663.2px;top:146.3px;width:24.3px;height:21.6px;background:#4a6190;border-radius:5px;border:1px solid #5670a0;box-sizing:border-box"></div>
<svg style="position:absolute;left:1665px;top:147px;" width="20" height="20" viewBox="0 0 20 20"><path d="M3 4h14l-7 12z" fill="#f0a050"/><path d="M7 7h6l-3 5z" fill="#4a6190"/></svg>
<div style="position:absolute;left:1693.3px;top:151.23px;font-size:14.5px;line-height:14.5px;color:#f5a848;white-space:pre;">Cube</div>
<svg style="position:absolute;left:1756px;top:148px;" width="20" height="19" viewBox="0 0 20 19"><path d="M3 4h13l-6.5 11z" fill="none" stroke="#2ec4b0" stroke-width="1.4"/><rect x="1" y="2" width="4" height="4" fill="#334d80" stroke="#2ec4b0" stroke-width="1.2"/><rect x="14" y="2" width="4" height="4" fill="#334d80" stroke="#2ec4b0" stroke-width="1.2"/><rect x="7.5" y="13" width="4" height="4" fill="#334d80" stroke="#2ec4b0" stroke-width="1.2"/></svg>
<svg style="position:absolute;left:1860px;top:150px;" width="20" height="14" viewBox="0 0 20 14"><path d="M1.5 7c4-6.5 13-6.5 17 0c-4 6.5-13 6.5-17 0z" fill="#e6e6e6"/><circle cx="10" cy="7" r="3.2" fill="#282828"/><circle cx="10" cy="7" r="1.6" fill="#e6e6e6"/></svg>
<svg style="position:absolute;left:1886px;top:149px;" width="19" height="16" viewBox="0 0 19 16"><path d="M1 4h4l2-3h5l2 3h4v11H1z" fill="#e6e6e6"/><circle cx="9.5" cy="9" r="4" fill="#334d80"/><circle cx="9.5" cy="9" r="2.3" fill="#e6e6e6"/></svg>
<div style="position:absolute;left:1588px;top:383px;width:332px;height:671px;background:#303030;border-radius:7px 0 0 7pxpx;"></div>
<div style="position:absolute;left:1588px;top:383px;width:332px;height:31px;background:#2c2c2c;border-radius:7px 0 0 0px;"></div>
<div style="position:absolute;left:1598.5px;top:387.4px;width:38px;height:22px;background:#232323;border-radius:5px;border:1px solid #333;box-sizing:border-box"></div>
<svg style="position:absolute;left:1600px;top:387px;" width="24" height="22" viewBox="0 0 24 22"><rect x="3" y="4" width="14.5" height="6.6" rx="3.3" fill="#e6e6e6"/><rect x="10.2" y="5.3" width="6" height="4" rx="0.8" fill="#232323"/><rect x="3" y="12.4" width="14.5" height="6.6" rx="3.3" fill="#e6e6e6"/><rect x="13.5" y="13.7" width="2.8" height="4" rx="0.8" fill="#232323"/></svg>
<svg style="position:absolute;left:1624px;top:395px;" width="9" height="7" viewBox="0 0 9 7"><path d="M1 1.5l3.6 3.6l3.6-3.6" fill="none" stroke="#cfcfcf" stroke-width="1.25" stroke-linecap="round" stroke-linejoin="round"/></svg>
<div style="position:absolute;left:1677px;top:387.4px;width:141.4px;height:22px;background:#1d1d1d;border-radius:5px;"></div>
<svg style="position:absolute;left:1679px;top:387px;" width="22" height="22" viewBox="0 0 22 22"><circle cx="12.5" cy="9" r="5" fill="none" stroke="#d0d0d0" stroke-width="1.4"/><path d="M9 12.5l-5 5" stroke="#d0d0d0" stroke-width="1.5"/></svg>
<div style="position:absolute;left:1885.6px;top:387.4px;width:22px;height:22px;background:#2a2a2a;border-radius:5px;"></div>
<svg style="position:absolute;left:1892px;top:395px;" width="9" height="7" viewBox="0 0 9 7"><path d="M1 1.5l3.6 3.6l3.6-3.6" fill="none" stroke="#cfcfcf" stroke-width="1.25" stroke-linecap="round" stroke-linejoin="round"/></svg>
<div style="position:absolute;left:1588.5px;top:414px;width:34.5px;height:640px;background:#1f1f1f;border-radius:0px;"></div>
<div style="position:absolute;left:1590px;top:697px;width:33px;height:33px;background:#303030;border-radius:5px 0 0 5pxpx;"></div>
<svg style="position:absolute;left:1596px;top:431px;" width="20" height="20" viewBox="0 0 20 20"><path d="M5 3v7M5 11a2.5 2.5 0 1 0 0.01 0z" stroke="#d0d0d0" stroke-width="2" fill="#d0d0d0"/><path d="M14 8v9M11 2v4a3 3 0 0 0 6 0V2" fill="none" stroke="#d0d0d0" stroke-width="2"/></svg>
<svg style="position:absolute;left:1596px;top:474px;" width="20" height="20" viewBox="0 0 20 20"><rect x="2" y="6" width="16" height="11" rx="1" fill="#d0d0d0"/><rect x="4" y="3" width="6" height="3" fill="#d0d0d0"/><path d="M4 10h12M4 13h12" stroke="#1f1f1f" stroke-width="1"/></svg>
<svg style="position:absolute;left:1596px;top:510px;" width="20" height="20" viewBox="0 0 20 20"><rect x="2" y="3" width="16" height="4" fill="#d0d0d0"/><rect x="4" y="7" width="12" height="10" fill="#d0d0d0"/><path d="M6 16l4-5l4 5z" fill="#1f1f1f"/></svg>
<svg style="position:absolute;left:1596px;top:545px;" width="20" height="20" viewBox="0 0 20 20"><rect x="7" y="3" width="11" height="10" fill="none" stroke="#d0d0d0" stroke-width="1.4"/><path d="M5 6v9h11M3 8v9h11" fill="none" stroke="#d0d0d0" stroke-width="1.1"/><path d="M9 12l3-5l3 5z" fill="#d0d0d0"/></svg>
<svg style="position:absolute;left:1596px;top:580px;" width="20" height="20" viewBox="0 0 20 20"><path d="M3 16c0-4 3-10 5-12c2 2 4 8 4 12z" fill="#d0d0d0"/><circle cx="15" cy="6" r="2.2" fill="#d0d0d0"/><circle cx="13.5" cy="14.5" r="4" fill="#1f1f1f" stroke="#d0d0d0" stroke-width="1.3"/></svg>
<svg style="position:absolute;left:1596px;top:615px;" width="20" height="20" viewBox="0 0 20 20"><circle cx="10" cy="10" r="7.3" fill="none" stroke="#c8506a" stroke-width="1.5"/><path d="M5.5 6.5c2.5-0.5 4 1 3.5 3s1.5 2.5 1 5.5M11.5 3.5c0 2.5 2.5 3 4.5 3.5M13 11.5c1.5 0 3 1 3.5 2" fill="none" stroke="#c8506a" stroke-width="1.6"/><path d="M3 17l14-14" stroke="#1f1f1f" stroke-width="0" /></svg>
<svg style="position:absolute;left:1596px;top:660px;" width="20" height="20" viewBox="0 0 20 20"><rect x="3" y="3" width="14" height="3.5" fill="none" stroke="#d0d0d0" stroke-width="1.3"/><rect x="4" y="7.5" width="12" height="9" fill="none" stroke="#d0d0d0" stroke-width="1.3"/><rect x="8" y="9.5" width="4" height="1.5" fill="#d0d0d0"/></svg>
<svg style="position:absolute;left:1596px;top:703px;" width="20" height="20" viewBox="0 0 20 20"><rect x="6" y="6" width="8" height="8" fill="#f0a050"/><path d="M3 6V3h3M14 3h3v3M17 14v3h-3M6 17H3v-3" fill="none" stroke="#c88a50" stroke-width="1.2"/></svg>
<svg style="position:absolute;left:1596px;top:738px;" width="20" height="20" viewBox="0 0 20 20"><path d="M3 17l8-8a4 4 0 0 1 5-6l-3 3l1 2l2 1l3-3a4 4 0 0 1-6 5l-8 8z" fill="#6b9ae8"/></svg>
<svg style="position:absolute;left:1596px;top:773px;" width="20" height="20" viewBox="0 0 20 20"><circle cx="4" cy="4" r="2.6" fill="#6b9ae8"/><circle cx="4" cy="16" r="2.3" fill="#6b9ae8"/><circle cx="16" cy="16" r="2.3" fill="#6b9ae8"/><path d="M4 4v12M4 4l12 12M4 4h12" stroke="#6b9ae8" stroke-width="1.5"/></svg>
<svg style="position:absolute;left:1596px;top:808px;" width="20" height="20" viewBox="0 0 20 20"><circle cx="9" cy="11" r="3.5" fill="#6b9ae8"/><path d="M4 8a6.5 6.5 0 0 0 10 8" fill="none" stroke="#6b9ae8" stroke-width="1.4"/><circle cx="15.5" cy="4.5" r="2" fill="#6b9ae8"/></svg>
<svg style="position:absolute;left:1596px;top:843px;" width="20" height="20" viewBox="0 0 20 20"><path d="M3 13l9-9c2-2 5 1 3 3l-9 9c-2 2-5-1-3-3z" fill="none" stroke="#6b9ae8" stroke-width="1.8"/><circle cx="8" cy="12" r="2.5" fill="#6b9ae8"/></svg>
<svg style="position:absolute;left:1596px;top:878px;" width="20" height="20" viewBox="0 0 20 20"><path d="M4 4h12l-6 11z" fill="none" stroke="#2ec4b0" stroke-width="1.6"/><rect x="2" y="2" width="4" height="4" fill="#1f1f1f" stroke="#2ec4b0" stroke-width="1.2"/><rect x="14" y="2" width="4" height="4" fill="#1f1f1f" stroke="#2ec4b0" stroke-width="1.2"/><rect x="8" y="13" width="4" height="4" fill="#1f1f1f" stroke="#2ec4b0" stroke-width="1.2"/></svg>
<svg style="position:absolute;left:1596px;top:913px;" width="20" height="20" viewBox="0 0 20 20"><circle cx="10" cy="10" r="8" fill="#c04a5a"/><path d="M10 2a8 8 0 0 1 8 8h-8zM10 10v8a8 8 0 0 1-8-8z" fill="#1f1f1f"/></svg>
<svg style="position:absolute;left:1596px;top:958px;" width="20" height="20" viewBox="0 0 20 20"><rect x="1.5" y="1.5" width="17" height="17" fill="#c04a5e"/><path d="M5.75 1.5h4.25v4.25H5.75zM14.25 1.5h4.25v4.25h-4.25zM1.5 5.75h4.25V10H1.5zM10 5.75h4.25V10H10zM5.75 10h4.25v4.25H5.75zM14.25 10h4.25v4.25h-4.25zM1.5 14.25h4.25v4.25H1.5zM10 14.25h4.25v4.25H10z" fill="#1f1f1f"/></svg>
<svg style="position:absolute;left:1635px;top:426px;" width="22" height="22" viewBox="0 0 22 22"><rect x="6" y="6" width="10" height="10" fill="#e6e6e6"/><path d="M3 6V3h3M16 3h3v3M19 16v3h-3M6 19H3v-3" fill="none" stroke="#c8c8c8" stroke-width="1.3"/></svg>
<div style="position:absolute;left:1665.6px;top:429.23px;font-size:14.5px;line-height:14.5px;color:#e6e6e6;white-space:pre;">Cube</div>
<svg style="position:absolute;left:1886px;top:424px;" width="24" height="24" viewBox="0 0 24 24"><path d="M13 4l7 7l-3 1l-3 3l-1 3l-6-6l3-1l3-3z" fill="none" stroke="#b0b0b0" stroke-width="1.3"/><path d="M8 16l-4 4" stroke="#b0b0b0" stroke-width="1.3"/></svg>
<div style="position:absolute;left:1634.4px;top:470px;width:274px;height:22.7px;background:#1d1d1d;border-radius:5px;"></div>
<div style="position:absolute;left:1634.4px;top:470px;width:38.2px;height:22.7px;background:#282828;border-radius:5px 0 0 5pxpx;"></div>
<svg style="position:absolute;left:1636px;top:470px;" width="24" height="23" viewBox="0 0 24 23"><rect x="7" y="7" width="9" height="9" fill="#e6e6e6"/><path d="M4 7V4h3M16 4h3v3M19 16v3h-3M7 19H4v-3" fill="none" stroke="#c8c8c8" stroke-width="1.2"/></svg>
<svg style="position:absolute;left:1659px;top:478px;" width="9" height="7" viewBox="0 0 9 7"><path d="M1 1.5l3.6 3.6l3.6-3.6" fill="none" stroke="#cfcfcf" stroke-width="1.25" stroke-linecap="round" stroke-linejoin="round"/></svg>
<div style="position:absolute;left:1681.9px;top:474.23px;font-size:14.5px;line-height:14.5px;color:#e6e6e6;white-space:pre;">Cube</div>
<div style="position:absolute;left:1633.2px;top:506.6px;width:276.7px;height:348.4px;background:#3d3d3d;border-radius:6px;"></div>
<svg style="position:absolute;left:1642px;top:515px;" width="14" height="10" viewBox="0 0 14 10"><path d="M2 2l5 5l5-5" fill="none" stroke="#d0d0d0" stroke-width="1.4"/></svg>
<div style="position:absolute;left:1660.6px;top:515.13px;font-size:14.5px;line-height:14.5px;color:#e6e6e6;white-space:pre;">Transform</div>
<svg style="position:absolute;left:1886px;top:517px;" width="16" height="9" viewBox="0 0 16 9"><rect x="1" y="1" width="2" height="2" fill="#9a9a9a"/><rect x="1" y="5" width="2" height="2" fill="#9a9a9a"/><rect x="5" y="1" width="2" height="2" fill="#9a9a9a"/><rect x="5" y="5" width="2" height="2" fill="#9a9a9a"/><rect x="9" y="1" width="2" height="2" fill="#9a9a9a"/><rect x="9" y="5" width="2" height="2" fill="#9a9a9a"/><rect x="13" y="1" width="2" height="2" fill="#9a9a9a"/><rect x="13" y="5" width="2" height="2" fill="#9a9a9a"/></svg>
<div style="position:absolute;left:1742px;top:548.2px;width:107px;height:70.59999999999991px;background:#545454;border-radius:5px;"></div>
<div style="position:absolute;left:1742px;top:629.3px;width:107px;height:72.20000000000005px;background:#545454;border-radius:5px;"></div>
<div style="position:absolute;left:1742px;top:741px;width:107px;height:72.29999999999995px;background:#545454;border-radius:5px;"></div>
<div style="position:absolute;right:190.70000000000005px;top:552.63px;font-size:14.5px;line-height:14.5px;color:#e0e0e0;white-space:pre;text-align:right;">Location X</div>
<div style="position:absolute;left:1595.5px;width:400px;top:552.63px;font-size:14.5px;line-height:14.5px;color:#e6e6e6;white-space:pre;text-align:center;">0 m</div>
<svg style="position:absolute;left:1852px;top:551.6px;" width="20" height="16" viewBox="0 0 20 16"><path d="M4 7V5a3.5 3.5 0 0 1 7 0" fill="none" stroke="#b8b8b8" stroke-width="1.3"/><rect x="6.5" y="7.5" width="11" height="7" fill="none" stroke="#b8b8b8" stroke-width="1.3"/><rect x="11" y="10" width="2" height="2" fill="#b8b8b8"/></svg>
<svg style="position:absolute;left:1883.4px;top:555.6px;" width="8" height="8" viewBox="0 0 8 8"><circle cx="4" cy="4" r="2.4" fill="#d8d8d8"/></svg>
<div style="position:absolute;left:1742px;top:571.5px;width:107px;height:1px;background:#3d3d3d;border-radius:0px;"></div>
<div style="position:absolute;right:190.70000000000005px;top:577.13px;font-size:14.5px;line-height:14.5px;color:#e0e0e0;white-space:pre;text-align:right;">Y</div>
<div style="position:absolute;left:1595.5px;width:400px;top:577.13px;font-size:14.5px;line-height:14.5px;color:#e6e6e6;white-space:pre;text-align:center;">0 m</div>
<svg style="position:absolute;left:1852px;top:576.1px;" width="20" height="16" viewBox="0 0 20 16"><path d="M4 7V5a3.5 3.5 0 0 1 7 0" fill="none" stroke="#b8b8b8" stroke-width="1.3"/><rect x="6.5" y="7.5" width="11" height="7" fill="none" stroke="#b8b8b8" stroke-width="1.3"/><rect x="11" y="10" width="2" height="2" fill="#b8b8b8"/></svg>
<svg style="position:absolute;left:1883.4px;top:580.1px;" width="8" height="8" viewBox="0 0 8 8"><circle cx="4" cy="4" r="2.4" fill="#d8d8d8"/></svg>
<div style="position:absolute;left:1742px;top:595.9px;width:107px;height:1px;background:#3d3d3d;border-radius:0px;"></div>
<div style="position:absolute;right:190.70000000000005px;top:600.88px;font-size:14.5px;line-height:14.5px;color:#e0e0e0;white-space:pre;text-align:right;">Z</div>
<div style="position:absolute;left:1595.5px;width:400px;top:600.88px;font-size:14.5px;line-height:14.5px;color:#e6e6e6;white-space:pre;text-align:center;">-0.30104</div>
<svg style="position:absolute;left:1852px;top:599.8499999999999px;" width="20" height="16" viewBox="0 0 20 16"><path d="M4 7V5a3.5 3.5 0 0 1 7 0" fill="none" stroke="#b8b8b8" stroke-width="1.3"/><rect x="6.5" y="7.5" width="11" height="7" fill="none" stroke="#b8b8b8" stroke-width="1.3"/><rect x="11" y="10" width="2" height="2" fill="#b8b8b8"/></svg>
<svg style="position:absolute;left:1883.4px;top:603.8499999999999px;" width="8" height="8" viewBox="0 0 8 8"><circle cx="4" cy="4" r="2.4" fill="#d8d8d8"/></svg>
<div style="position:absolute;right:190.70000000000005px;top:633.68px;font-size:14.5px;line-height:14.5px;color:#e0e0e0;white-space:pre;text-align:right;">Rotation X</div>
<div style="position:absolute;left:1595.5px;width:400px;top:633.68px;font-size:14.5px;line-height:14.5px;color:#e6e6e6;white-space:pre;text-align:center;">0°</div>
<svg style="position:absolute;left:1852px;top:632.65px;" width="20" height="16" viewBox="0 0 20 16"><path d="M4 7V5a3.5 3.5 0 0 1 7 0" fill="none" stroke="#b8b8b8" stroke-width="1.3"/><rect x="6.5" y="7.5" width="11" height="7" fill="none" stroke="#b8b8b8" stroke-width="1.3"/><rect x="11" y="10" width="2" height="2" fill="#b8b8b8"/></svg>
<svg style="position:absolute;left:1883.4px;top:636.65px;" width="8" height="8" viewBox="0 0 8 8"><circle cx="4" cy="4" r="2.4" fill="#d8d8d8"/></svg>
<div style="position:absolute;left:1742px;top:652.6px;width:107px;height:1px;background:#3d3d3d;border-radius:0px;"></div>
<div style="position:absolute;right:190.70000000000005px;top:658.18px;font-size:14.5px;line-height:14.5px;color:#e0e0e0;white-space:pre;text-align:right;">Y</div>
<div style="position:absolute;left:1595.5px;width:400px;top:658.18px;font-size:14.5px;line-height:14.5px;color:#e6e6e6;white-space:pre;text-align:center;">0°</div>
<svg style="position:absolute;left:1852px;top:657.1500000000001px;" width="20" height="16" viewBox="0 0 20 16"><path d="M4 7V5a3.5 3.5 0 0 1 7 0" fill="none" stroke="#b8b8b8" stroke-width="1.3"/><rect x="6.5" y="7.5" width="11" height="7" fill="none" stroke="#b8b8b8" stroke-width="1.3"/><rect x="11" y="10" width="2" height="2" fill="#b8b8b8"/></svg>
<svg style="position:absolute;left:1883.4px;top:661.1500000000001px;" width="8" height="8" viewBox="0 0 8 8"><circle cx="4" cy="4" r="2.4" fill="#d8d8d8"/></svg>
<div style="position:absolute;left:1742px;top:676.9px;width:107px;height:1px;background:#3d3d3d;border-radius:0px;"></div>
<div style="position:absolute;right:190.70000000000005px;top:682.73px;font-size:14.5px;line-height:14.5px;color:#e0e0e0;white-space:pre;text-align:right;">Z</div>
<div style="position:absolute;left:1595.5px;width:400px;top:682.73px;font-size:14.5px;line-height:14.5px;color:#e6e6e6;white-space:pre;text-align:center;">0°</div>
<svg style="position:absolute;left:1852px;top:681.7px;" width="20" height="16" viewBox="0 0 20 16"><path d="M4 7V5a3.5 3.5 0 0 1 7 0" fill="none" stroke="#b8b8b8" stroke-width="1.3"/><rect x="6.5" y="7.5" width="11" height="7" fill="none" stroke="#b8b8b8" stroke-width="1.3"/><rect x="11" y="10" width="2" height="2" fill="#b8b8b8"/></svg>
<svg style="position:absolute;left:1883.4px;top:685.7px;" width="8" height="8" viewBox="0 0 8 8"><circle cx="4" cy="4" r="2.4" fill="#d8d8d8"/></svg>
<div style="position:absolute;right:190.70000000000005px;top:745.28px;font-size:14.5px;line-height:14.5px;color:#e0e0e0;white-space:pre;text-align:right;">Scale X</div>
<div style="position:absolute;left:1595.5px;width:400px;top:745.28px;font-size:14.5px;line-height:14.5px;color:#e6e6e6;white-space:pre;text-align:center;">1.000</div>
<svg style="position:absolute;left:1852px;top:744.25px;" width="20" height="16" viewBox="0 0 20 16"><path d="M4 7V5a3.5 3.5 0 0 1 7 0" fill="none" stroke="#b8b8b8" stroke-width="1.3"/><rect x="6.5" y="7.5" width="11" height="7" fill="none" stroke="#b8b8b8" stroke-width="1.3"/><rect x="11" y="10" width="2" height="2" fill="#b8b8b8"/></svg>
<svg style="position:absolute;left:1883.4px;top:748.25px;" width="8" height="8" viewBox="0 0 8 8"><circle cx="4" cy="4" r="2.4" fill="#d8d8d8"/></svg>
<div style="position:absolute;left:1742px;top:764.4px;width:107px;height:1px;background:#3d3d3d;border-radius:0px;"></div>
<div style="position:absolute;right:190.70000000000005px;top:769.98px;font-size:14.5px;line-height:14.5px;color:#e0e0e0;white-space:pre;text-align:right;">Y</div>
<div style="position:absolute;left:1595.5px;width:400px;top:769.98px;font-size:14.5px;line-height:14.5px;color:#e6e6e6;white-space:pre;text-align:center;">4.119</div>
<svg style="position:absolute;left:1852px;top:768.95px;" width="20" height="16" viewBox="0 0 20 16"><path d="M4 7V5a3.5 3.5 0 0 1 7 0" fill="none" stroke="#b8b8b8" stroke-width="1.3"/><rect x="6.5" y="7.5" width="11" height="7" fill="none" stroke="#b8b8b8" stroke-width="1.3"/><rect x="11" y="10" width="2" height="2" fill="#b8b8b8"/></svg>
<svg style="position:absolute;left:1883.4px;top:772.95px;" width="8" height="8" viewBox="0 0 8 8"><circle cx="4" cy="4" r="2.4" fill="#d8d8d8"/></svg>
<div style="position:absolute;left:1742px;top:789px;width:107px;height:1px;background:#3d3d3d;border-radius:0px;"></div>
<div style="position:absolute;right:190.70000000000005px;top:794.68px;font-size:14.5px;line-height:14.5px;color:#e0e0e0;white-space:pre;text-align:right;">Z</div>
<div style="position:absolute;left:1595.5px;width:400px;top:794.68px;font-size:14.5px;line-height:14.5px;color:#e6e6e6;white-space:pre;text-align:center;">1.000</div>
<svg style="position:absolute;left:1852px;top:793.65px;" width="20" height="16" viewBox="0 0 20 16"><path d="M4 7V5a3.5 3.5 0 0 1 7 0" fill="none" stroke="#b8b8b8" stroke-width="1.3"/><rect x="6.5" y="7.5" width="11" height="7" fill="none" stroke="#b8b8b8" stroke-width="1.3"/><rect x="11" y="10" width="2" height="2" fill="#b8b8b8"/></svg>
<svg style="position:absolute;left:1883.4px;top:797.65px;" width="8" height="8" viewBox="0 0 8 8"><circle cx="4" cy="4" r="2.4" fill="#d8d8d8"/></svg>
<div style="position:absolute;left:1742px;top:710.3px;width:107px;height:22.7px;background:#282828;border-radius:5px;"></div>
<div style="position:absolute;right:190.70000000000005px;top:714.73px;font-size:14.5px;line-height:14.5px;color:#e0e0e0;white-space:pre;text-align:right;">Mode</div>
<div style="position:absolute;left:1751.3px;top:714.73px;font-size:14.5px;line-height:14.5px;color:#e6e6e6;white-space:pre;">XYZ Euler</div>
<svg style="position:absolute;left:1836px;top:718px;" width="9" height="7" viewBox="0 0 9 7"><path d="M1 1.5l3.6 3.6l3.6-3.6" fill="none" stroke="#cfcfcf" stroke-width="1.25" stroke-linecap="round" stroke-linejoin="round"/></svg>
<svg style="position:absolute;left:1883.4px;top:717.5px;" width="8" height="8" viewBox="0 0 8 8"><circle cx="4" cy="4" r="2.4" fill="#d8d8d8"/></svg>
<svg style="position:absolute;left:1663px;top:835px;" width="7" height="11" viewBox="0 0 7 11"><path d="M1.5 1l4 4.5l-4 4.5" fill="none" stroke="#cfcfcf" stroke-width="1.3" stroke-linecap="round" stroke-linejoin="round"/></svg>
<div style="position:absolute;left:1677.2px;top:833.43px;font-size:14.5px;line-height:14.5px;color:#e0e0e0;white-space:pre;">Delta Transform</div>
<div style="position:absolute;left:1633.2px;top:858.5px;width:276.8px;height:30.899999999999977px;background:#3d3d3d;border-radius:6px;"></div>
<svg style="position:absolute;left:1646px;top:868.45px;" width="7" height="11" viewBox="0 0 7 11"><path d="M1.5 1l4 4.5l-4 4.5" fill="none" stroke="#cfcfcf" stroke-width="1.3" stroke-linecap="round" stroke-linejoin="round"/></svg>
<div style="position:absolute;left:1659.8px;top:866.98px;font-size:14.5px;line-height:14.5px;color:#e0e0e0;white-space:pre;">Relations</div>
<svg style="position:absolute;left:1886px;top:869.45px;" width="16" height="9" viewBox="0 0 16 9"><rect x="1" y="1" width="2" height="2" fill="#9a9a9a"/><rect x="1" y="5" width="2" height="2" fill="#9a9a9a"/><rect x="5" y="1" width="2" height="2" fill="#9a9a9a"/><rect x="5" y="5" width="2" height="2" fill="#9a9a9a"/><rect x="9" y="1" width="2" height="2" fill="#9a9a9a"/><rect x="9" y="5" width="2" height="2" fill="#9a9a9a"/><rect x="13" y="1" width="2" height="2" fill="#9a9a9a"/><rect x="13" y="5" width="2" height="2" fill="#9a9a9a"/></svg>
<div style="position:absolute;left:1633.2px;top:891.5px;width:276.8px;height:30.899999999999977px;background:#3d3d3d;border-radius:6px;"></div>
<svg style="position:absolute;left:1646px;top:901.45px;" width="7" height="11" viewBox="0 0 7 11"><path d="M1.5 1l4 4.5l-4 4.5" fill="none" stroke="#cfcfcf" stroke-width="1.3" stroke-linecap="round" stroke-linejoin="round"/></svg>
<div style="position:absolute;left:1659.8px;top:899.98px;font-size:14.5px;line-height:14.5px;color:#e0e0e0;white-space:pre;">Collections</div>
<svg style="position:absolute;left:1886px;top:902.45px;" width="16" height="9" viewBox="0 0 16 9"><rect x="1" y="1" width="2" height="2" fill="#9a9a9a"/><rect x="1" y="5" width="2" height="2" fill="#9a9a9a"/><rect x="5" y="1" width="2" height="2" fill="#9a9a9a"/><rect x="5" y="5" width="2" height="2" fill="#9a9a9a"/><rect x="9" y="1" width="2" height="2" fill="#9a9a9a"/><rect x="9" y="5" width="2" height="2" fill="#9a9a9a"/><rect x="13" y="1" width="2" height="2" fill="#9a9a9a"/><rect x="13" y="5" width="2" height="2" fill="#9a9a9a"/></svg>
<div style="position:absolute;left:1633.2px;top:924.5px;width:276.8px;height:30.899999999999977px;background:#3d3d3d;border-radius:6px;"></div>
<svg style="position:absolute;left:1646px;top:934.45px;" width="7" height="11" viewBox="0 0 7 11"><path d="M1.5 1l4 4.5l-4 4.5" fill="none" stroke="#cfcfcf" stroke-width="1.3" stroke-linecap="round" stroke-linejoin="round"/></svg>
<div style="position:absolute;left:1659.8px;top:932.98px;font-size:14.5px;line-height:14.5px;color:#e0e0e0;white-space:pre;">Instancing</div>
<svg style="position:absolute;left:1886px;top:935.45px;" width="16" height="9" viewBox="0 0 16 9"><rect x="1" y="1" width="2" height="2" fill="#9a9a9a"/><rect x="1" y="5" width="2" height="2" fill="#9a9a9a"/><rect x="5" y="1" width="2" height="2" fill="#9a9a9a"/><rect x="5" y="5" width="2" height="2" fill="#9a9a9a"/><rect x="9" y="1" width="2" height="2" fill="#9a9a9a"/><rect x="9" y="5" width="2" height="2" fill="#9a9a9a"/><rect x="13" y="1" width="2" height="2" fill="#9a9a9a"/><rect x="13" y="5" width="2" height="2" fill="#9a9a9a"/></svg>
<div style="position:absolute;left:1633.2px;top:957.5px;width:276.8px;height:30.899999999999977px;background:#3d3d3d;border-radius:6px;"></div>
<svg style="position:absolute;left:1646px;top:967.45px;" width="7" height="11" viewBox="0 0 7 11"><path d="M1.5 1l4 4.5l-4 4.5" fill="none" stroke="#cfcfcf" stroke-width="1.3" stroke-linecap="round" stroke-linejoin="round"/></svg>
<div style="position:absolute;left:1659.8px;top:965.98px;font-size:14.5px;line-height:14.5px;color:#e0e0e0;white-space:pre;">Motion Paths</div>
<svg style="position:absolute;left:1886px;top:968.45px;" width="16" height="9" viewBox="0 0 16 9"><rect x="1" y="1" width="2" height="2" fill="#9a9a9a"/><rect x="1" y="5" width="2" height="2" fill="#9a9a9a"/><rect x="5" y="1" width="2" height="2" fill="#9a9a9a"/><rect x="5" y="5" width="2" height="2" fill="#9a9a9a"/><rect x="9" y="1" width="2" height="2" fill="#9a9a9a"/><rect x="9" y="5" width="2" height="2" fill="#9a9a9a"/><rect x="13" y="1" width="2" height="2" fill="#9a9a9a"/><rect x="13" y="5" width="2" height="2" fill="#9a9a9a"/></svg>
<div style="position:absolute;left:1633.2px;top:990.5px;width:276.8px;height:29.799999999999955px;background:#3d3d3d;border-radius:6px;"></div>
<svg style="position:absolute;left:1646px;top:999.9px;" width="7" height="11" viewBox="0 0 7 11"><path d="M1.5 1l4 4.5l-4 4.5" fill="none" stroke="#cfcfcf" stroke-width="1.3" stroke-linecap="round" stroke-linejoin="round"/></svg>
<div style="position:absolute;left:1659.8px;top:998.43px;font-size:14.5px;line-height:14.5px;color:#e0e0e0;white-space:pre;">Visibility</div>
<svg style="position:absolute;left:1886px;top:1000.9px;" width="16" height="9" viewBox="0 0 16 9"><rect x="1" y="1" width="2" height="2" fill="#9a9a9a"/><rect x="1" y="5" width="2" height="2" fill="#9a9a9a"/><rect x="5" y="1" width="2" height="2" fill="#9a9a9a"/><rect x="5" y="5" width="2" height="2" fill="#9a9a9a"/><rect x="9" y="1" width="2" height="2" fill="#9a9a9a"/><rect x="9" y="5" width="2" height="2" fill="#9a9a9a"/><rect x="13" y="1" width="2" height="2" fill="#9a9a9a"/><rect x="13" y="5" width="2" height="2" fill="#9a9a9a"/></svg>
<div style="position:absolute;left:1633.2px;top:1023.5px;width:276.8px;height:32.5px;background:#3d3d3d;border-radius:6px;"></div>
<svg style="position:absolute;left:1646px;top:1034.25px;" width="7" height="11" viewBox="0 0 7 11"><path d="M1.5 1l4 4.5l-4 4.5" fill="none" stroke="#cfcfcf" stroke-width="1.3" stroke-linecap="round" stroke-linejoin="round"/></svg>
<div style="position:absolute;left:1659.8px;top:1032.78px;font-size:14.5px;line-height:14.5px;color:#e0e0e0;white-space:pre;">Viewport Display</div>
<svg style="position:absolute;left:1886px;top:1035.25px;" width="16" height="9" viewBox="0 0 16 9"><rect x="1" y="1" width="2" height="2" fill="#9a9a9a"/><rect x="1" y="5" width="2" height="2" fill="#9a9a9a"/><rect x="5" y="1" width="2" height="2" fill="#9a9a9a"/><rect x="5" y="5" width="2" height="2" fill="#9a9a9a"/><rect x="9" y="1" width="2" height="2" fill="#9a9a9a"/><rect x="9" y="5" width="2" height="2" fill="#9a9a9a"/><rect x="13" y="1" width="2" height="2" fill="#9a9a9a"/><rect x="13" y="5" width="2" height="2" fill="#9a9a9a"/></svg>
<div style="position:absolute;left:1588px;top:1054px;width:332px;height:26px;background:#181818;border-radius:0px;"></div>
<div style="position:absolute;right:16.40000000000009px;top:1060.23px;font-size:14.5px;line-height:14.5px;color:#8c8c8c;white-space:pre;text-align:right;">4.0.2</div>
<div style="position:absolute;left:1912.5px;top:425px;width:4.5px;height:560px;background:#3b3b3b;border-radius:2px;"></div>
</body></html>
